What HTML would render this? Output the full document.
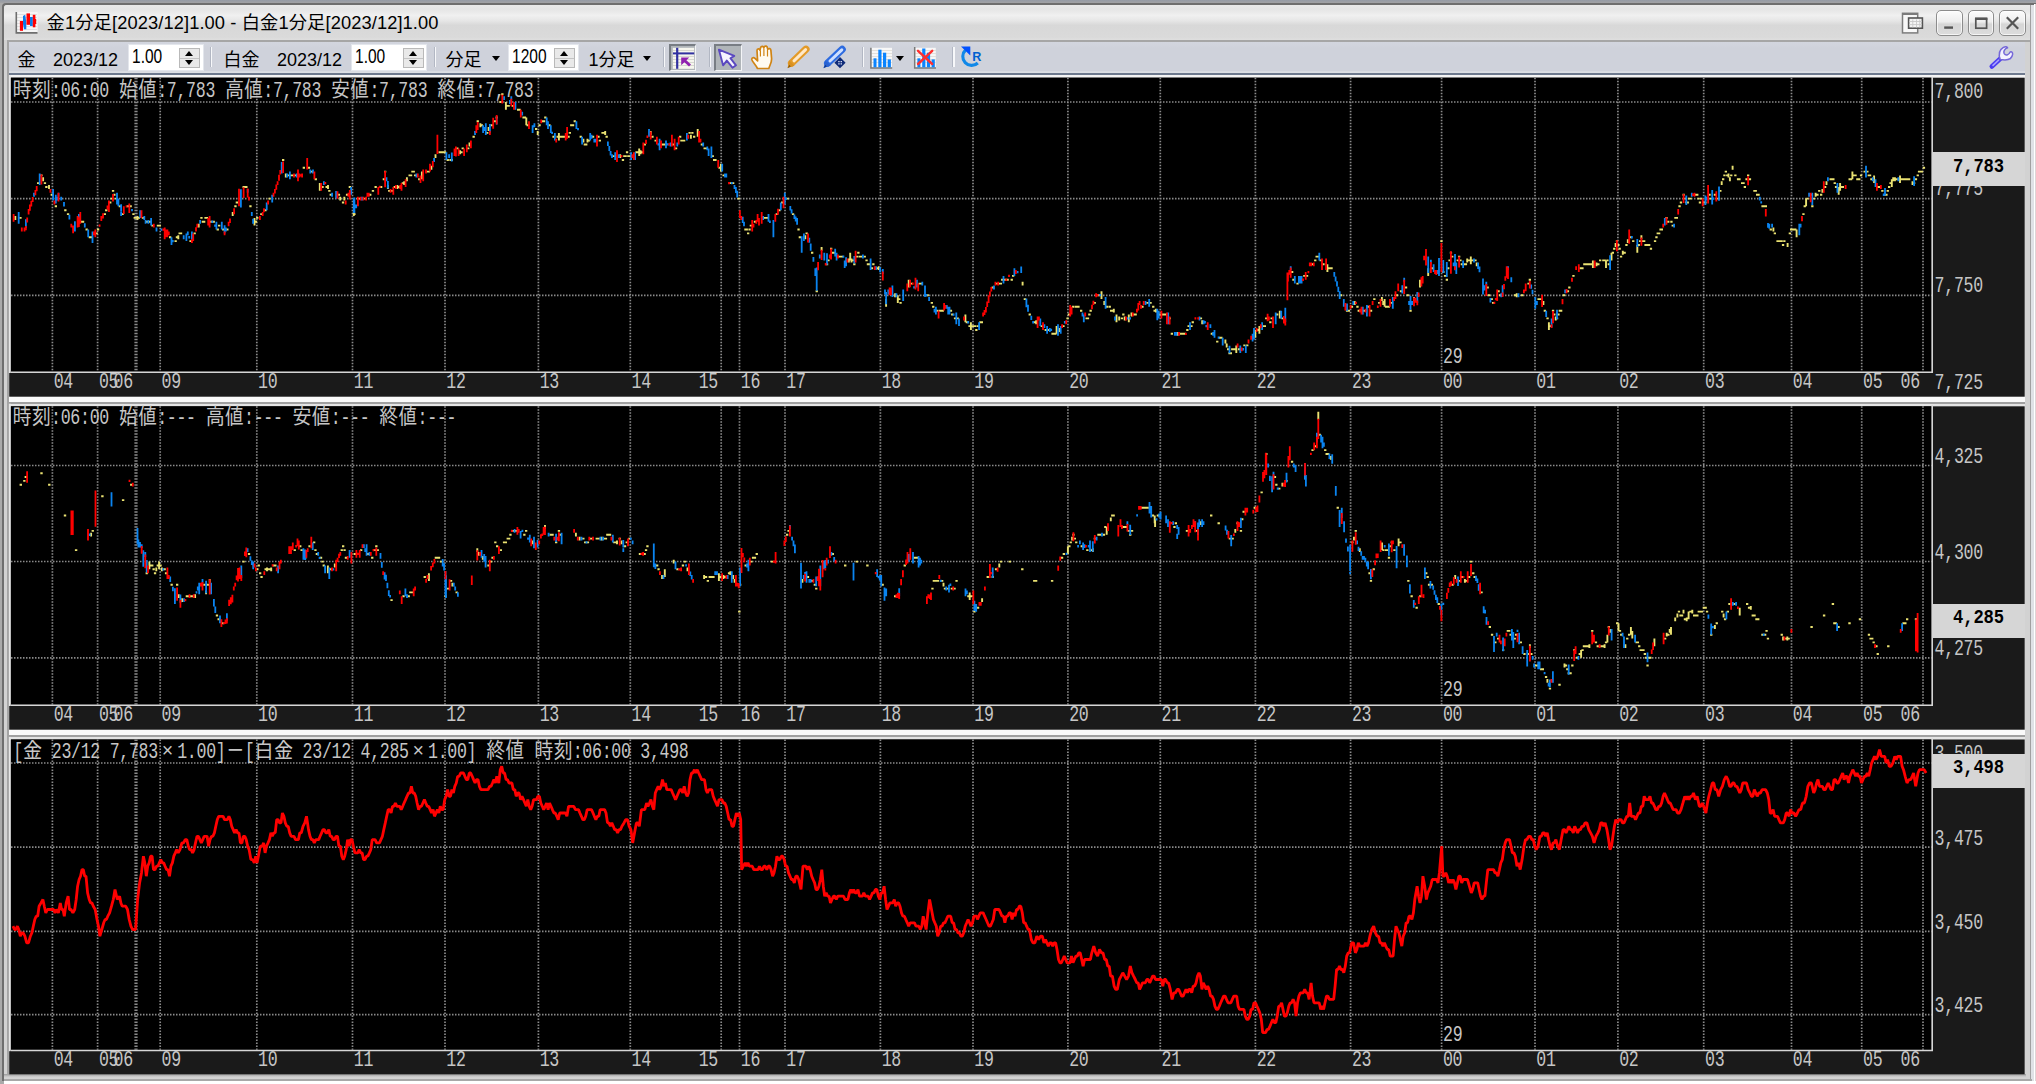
<!DOCTYPE html>
<html lang="ja"><head><meta charset="utf-8"><title>金1分足[2023/12]1.00 - 白金1分足[2023/12]1.00</title>
<style>
html,body{margin:0;padding:0}
body{width:2036px;height:1084px;overflow:hidden;background:#fff;position:relative;font-family:"Liberation Sans","Noto Sans CJK JP",sans-serif;color:#000}
.a{position:absolute}
.ttext{position:absolute;left:46.6px;top:11px;font-size:18.3px;line-height:24px;white-space:nowrap;letter-spacing:0.1px}
.lab{position:absolute;font-size:18px;line-height:24px;top:47.5px;white-space:nowrap}
.inp{position:absolute;top:44.3px;height:27px;background:#fff;box-sizing:border-box;border:1px solid #e3e6ec;font-size:18.5px;line-height:22px}
.inp span{position:absolute;left:3px;top:-0.3px;transform:scale(.84,1.1);transform-origin:0 50%}
.spin{position:absolute;right:2.5px;top:2.5px;width:21px;height:20.5px;background:#e9e9e9;border:1px solid #b9b9b9;box-sizing:border-box}
.spin:before{content:"";position:absolute;left:0;top:9px;width:19px;height:1.5px;background:#c4c4c4}
.spin i{position:absolute;left:5px;width:0;height:0;border-left:4.5px solid transparent;border-right:4.5px solid transparent}
.spin i.u{top:2.5px;border-bottom:5px solid #000}
.spin i.d{bottom:2.5px;border-top:5px solid #000}
.dd{position:absolute;top:56px;width:0;height:0;border-left:4.6px solid transparent;border-right:4.6px solid transparent;border-top:5px solid #000}
.vs{position:absolute;top:47px;width:1.5px;height:20px;background:#f7f8fa;border-left:1.5px solid #b2b7c3}
.btn{position:absolute;top:43.5px;height:27.2px;box-sizing:border-box}
.btn.on{background:#b0b5b9;border:2px solid #787d84;border-right:1.6px solid #f4f5f7;border-bottom:1.6px solid #f4f5f7}
.cv{position:absolute;left:0;top:0}
.m{position:absolute;white-space:pre;color:#c6c6c6;line-height:24px;height:24px;font-family:"Liberation Mono","IPAGothic",monospace}
.m .j{font-size:19.3px;font-family:"Liberation Mono","IPAGothic",monospace;display:inline-block;transform:scaleY(1.15);transform-origin:50% 55%}
.m .l{font-size:16.6px;letter-spacing:-0.31px;font-family:"Liberation Mono","IPAGothic",monospace;display:inline-block;transform:scaleY(1.3);transform-origin:50% 50%}
.m .x{display:inline-block;width:19.3px;text-align:center;font-size:19.3px;font-family:"Liberation Mono","IPAGothic",monospace}
.m.pb{color:#000;font-weight:bold;text-align:center;font-size:17.2px;letter-spacing:-0.1px;transform:scaleY(1.15)}
.wb{position:absolute;top:9.6px;width:26.6px;height:26.6px;box-sizing:border-box;border:1.8px solid #8c8c8c;border-radius:5px;background:linear-gradient(#fcfcfc,#ededed 45%,#d6d6d6 55%,#dcdcdc);box-shadow:inset 0 0 0 1px rgba(255,255,255,.7)}
</style></head><body>
<!-- frame -->
<div class="a" style="left:0;top:0;width:2036px;height:1084px;background:#aaa"></div>
<div class="a" style="left:0;top:0;width:2036px;height:3px;background:linear-gradient(#949aa5,#a2a2a4)"></div>
<div class="a" style="left:1.6px;top:2.9px;width:2034.4px;height:1078.1px;background:#6e6e6e;border-radius:4px 0 0 0"></div>
<div class="a" style="left:3.6px;top:4.8px;width:2032.4px;height:1079.2px;background:#d2d2d2;border-radius:3px 0 0 0"></div>
<!-- title gradient -->
<div class="a" style="left:3.6px;top:4.8px;width:2027.4px;height:35.4px;border-radius:3px 0 0 0;background:linear-gradient(#e9e9e9 0%,#e5e5e5 12%,#f0f0f0 30%,#e6e6e6 45%,#d8d8d8 58%,#dadada 92%,#dfdfdf 100%)"></div>
<!-- right edge stripes -->
<div class="a" style="left:2029.8px;top:4.8px;width:1.5px;height:1076px;background:#a0a0a0"></div>
<div class="a" style="left:2031.3px;top:4.8px;width:2.5px;height:1077px;background:#e0e2e6"></div>
<div class="a" style="left:2033.7px;top:3.5px;width:1.4px;height:1081px;background:#fff"></div>
<div class="a" style="left:2035.1px;top:3.5px;width:1px;height:1081px;background:#dcd6d6"></div>
<!-- bottom stripes -->
<div class="a" style="left:3.6px;top:1079.3px;width:2028px;height:1.8px;background:#a8a8a8"></div>
<div class="a" style="left:3.6px;top:1081.4px;width:2032.4px;height:2.6px;background:#fff"></div>
<!-- left mid-gray + inner white border -->
<div class="a" style="left:7.2px;top:40px;width:1.7px;height:1036px;background:#a4a4a4"></div>
<!-- line between title and toolbar -->
<div class="a" style="left:7px;top:40.1px;width:2022.8px;height:2px;background:#a6a6a6"></div>
<!-- toolbar -->
<div class="a" style="left:8.9px;top:42.2px;width:2016.4px;height:30.4px;background:linear-gradient(#d3d6df,#cfd2db 20%,#cfd2db 92%,#dcdfe4 96%)"></div>
<div class="a" style="left:8.9px;top:72.6px;width:2016.4px;height:2.2px;background:#6e7a8e"></div>
<div class="a" style="left:8.9px;top:74.9px;width:2016.4px;height:1001px;background:#f4f4f4"></div>
<div class="a" style="left:1990px;top:1074.3px;width:36px;height:5px;background:linear-gradient(#9a9a9a,#d2d2d2 60%,#d4d4d4)"></div>
<div class="a" style="left:3.6px;top:1074.3px;width:2022px;height:5px;background:linear-gradient(#9a9a9a,#d2d2d2 60%,#d4d4d4)"></div>
<!-- panel separators -->
<div class="a" style="left:8.9px;top:396.7px;width:2016.4px;height:5.6px;background:#fafafa"></div>
<div class="a" style="left:8.9px;top:402.3px;width:2016.4px;height:1.8px;background:#a0a0a0"></div>
<div class="a" style="left:8.9px;top:404.1px;width:2016.4px;height:2.2px;background:#e4e4e4"></div>
<div class="a" style="left:8.9px;top:729.7px;width:2016.4px;height:5.6px;background:#fafafa"></div>
<div class="a" style="left:8.9px;top:735.3px;width:2016.4px;height:1.7px;background:#a0a0a0"></div>
<div class="a" style="left:8.9px;top:737px;width:2016.4px;height:2.5px;background:#e4e4e4"></div>
<!--TITLEICON-->
<div class="ttext">金1分足[2023/12]1.00 - 白金1分足[2023/12]1.00</div>
<div class="wb" style="left:1936.4px"></div><div class="wb" style="left:1967.8px"></div><div class="wb" style="left:1999.2px"></div>
<div class="lab" style="left:17.5px">金</div>
<div class="lab" style="left:53px">2023/12</div>
<div class="inp" style="left:127.5px;width:76px"><span>1.00</span><div class="spin"><i class="u"></i><i class="d"></i></div></div>
<div class="vs" style="left:209.5px"></div>
<div class="lab" style="left:223.5px">白金</div>
<div class="lab" style="left:277px">2023/12</div>
<div class="inp" style="left:351px;width:76px"><span>1.00</span><div class="spin"><i class="u"></i><i class="d"></i></div></div>
<div class="vs" style="left:433.5px"></div>
<div class="lab" style="left:445.5px">分足</div>
<div class="dd" style="left:491.5px"></div>
<div class="inp" style="left:507.5px;width:71px"><span>1200</span><div class="spin"><i class="u"></i><i class="d"></i></div></div>
<div class="lab" style="left:588.5px">1分足</div>
<div class="dd" style="left:643px"></div>
<div class="vs" style="left:662.5px"></div>
<div class="btn on" style="left:668.8px;width:26.8px"></div>
<div class="vs" style="left:708.5px"></div>
<div class="btn on" style="left:713.9px;width:28px"></div>
<div class="vs" style="left:861.5px"></div>
<div class="dd" style="left:896.3px"></div>
<div class="vs" style="left:952px"></div>
<svg class="cv" width="2036" height="84" viewBox="0 0 2036 84">

<!-- title icon -->
<g>
<rect x="16.8" y="12" width="20.8" height="20.5" fill="#f6f6f6"/>
<path d="M17 14.5H37M17 17.5H37M17 20.5H37M17 23.5H37M17 26.5H37M17 29.5H37" stroke="#dcdcdc" stroke-width="0.9"/>
<path d="M16.3 12V32.9H37.5" stroke="#6e6e6e" stroke-width="1.6" fill="none"/>
<rect x="19.9" y="21" width="3.1" height="9.8" fill="#ff0000"/>
<path d="M23 16 L25.2 14.8 L26.3 22 L26.3 29.2 L24 29.2 L23 24Z" fill="#0a7be8"/>
<rect x="26.5" y="13.4" width="3.5" height="11.4" fill="#ff0000"/>
<rect x="30" y="17" width="2.8" height="9" fill="#0a7be8"/>
<rect x="32.8" y="14.8" width="2.6" height="12.5" fill="#ff0000"/>
<rect x="34.8" y="19" width="1.4" height="5" fill="#ff0000"/>
</g>
<!-- window buttons -->
<g fill="none">
<rect x="1902.5" y="13.3" width="15.2" height="19.6" fill="#f8f8f8" stroke="#7c7c7c" stroke-width="1.5"/>
<rect x="1902.5" y="13" width="15.2" height="2" fill="#7c7c7c"/>
<rect x="1908.6" y="18" width="13.8" height="10.2" fill="#f4f4f4" stroke="#555" stroke-width="1.6"/>
<path d="M1909 21.5H1922M1909 24.6H1922M1912.8 19.5V27.5M1916.5 19.5V27.5M1919.8 19.5V27.5" stroke="#c8c8c8" stroke-width="0.9"/>
<path d="M1944.2 27.6H1953" stroke="#555" stroke-width="2.4"/>
<rect x="1975.8" y="19" width="10.8" height="9.2" stroke="#555" stroke-width="1.7"/>
<rect x="1975" y="17.4" width="12.4" height="2.6" fill="#555"/>
<path d="M2006.8 17.2L2018.2 28.8M2018.2 17.2L2006.8 28.8" stroke="#555" stroke-width="2.2"/>
</g>
<!-- crosshair icon -->
<g>
<rect x="672.8" y="47.8" width="21.4" height="21" fill="#f6f6ee"/>
<path d="M673 50.5H694M673 56.5H694M673 59.5H694M673 62.5H694M673 65.5H694" stroke="#d4d4cc" stroke-width="0.9"/>
<path d="M677.2 47.8V68.8" stroke="#3030a0" stroke-width="2.2"/>
<path d="M673 53.4H694.2" stroke="#3030a0" stroke-width="2"/>
<path d="M681.2 57.6H689.2L686.4 60.2L691 64.4L689 66.4L684.4 62.2L681.2 65.2Z" fill="#9020b0"/>
</g>
<!-- pointer -->
<path d="M718.9 49.7L734.3 55.9L730.4 58.2L736 65.3L732.5 67.7L726.8 60.6L723.1 65.3Z" fill="#f6f3ff" stroke="#5a48c0" stroke-width="1.9" stroke-linejoin="round"/>
<!-- hand -->
<path d="M757.5 68.5 C755.5 64.5 752 61.5 751.8 59.4 C751.7 57.6 753.6 57.2 755 58.4 L757.6 60.8 L757 50.5 C757 48.6 759.6 48.4 760 50.2 L760.6 47.6 C761.2 45.8 763.6 46 763.8 47.8 L764.2 46.9 C765.2 45.4 767.4 46 767.4 48 L767.8 49.2 C769 47.9 770.8 48.6 770.9 50.4 L771.6 58.5 C771.8 62.5 769.8 65 768.8 68.5Z" fill="#fffaf0" stroke="#d08414" stroke-width="1.7" stroke-linejoin="round"/>
<path d="M760.4 50.5V56.5M763.9 48.5V56M767.5 49.5V56.5" stroke="#d08414" stroke-width="1.2" fill="none"/>
<!-- pencil orange -->
<g>
<path d="M806 49.2L791.5 63.2" stroke="#e39a28" stroke-width="7.2" stroke-linecap="round"/>
<path d="M805.6 49.6L794 60.8" stroke="#ffe9c8" stroke-width="3" stroke-linecap="round"/>
<path d="M789.2 60.6L794.4 65.6L787.6 68Z" fill="#d89020"/>
<path d="M787.4 68.2L789.4 64.8L790.8 66.6Z" fill="#8a5a10"/>
</g>
<!-- blue pen -->
<g>
<path d="M842.2 49.4L827.6 63.2" stroke="#2e6ce0" stroke-width="7.2" stroke-linecap="round"/>
<path d="M841.8 49.8L830 61" stroke="#cfe0ff" stroke-width="3" stroke-linecap="round"/>
<path d="M825.4 60.6L830.6 65.6L823.6 68Z" fill="#2a62d0"/>
<path d="M823.4 68.2L825.4 64.8L826.8 66.6Z" fill="#123c90"/>
<path d="M840 57.1L845.6 62.7L840 68.3L834.4 62.7Z" fill="#0e2a78"/>
<path d="M838.3 61h1.3v1.3h-1.3zM840.6 61h1.3v1.3h-1.3zM838.3 63.3h1.3v1.3h-1.3zM840.6 63.3h1.3v1.3h-1.3z" fill="#e8eeff"/>
</g>
<!-- bar chart -->
<g>
<rect x="871.2" y="47.8" width="20.8" height="19.6" fill="#f7f7f7"/>
<path d="M871.5 50.5H892M871.5 53.5H892M871.5 56.5H892M871.5 59.5H892M871.5 62.5H892" stroke="#e0dcd6" stroke-width="0.9"/>
<path d="M870.9 47.8V68H892.2" stroke="#7a7a7a" stroke-width="1.5" fill="none"/>
<rect x="873.5" y="58.3" width="3" height="9" fill="#0a84ff"/><rect x="878.3" y="49.7" width="3.2" height="17.6" fill="#0a84ff"/><rect x="883" y="52.7" width="3.2" height="14.6" fill="#0a84ff"/><rect x="887.7" y="59.4" width="3.2" height="7.9" fill="#0a84ff"/>
</g>
<!-- x chart -->
<g>
<rect x="915" y="47.8" width="20.8" height="19.6" fill="#f7f7f7"/>
<path d="M915.5 50.5H936M915.5 53.5H936M915.5 56.5H936M915.5 59.5H936M915.5 62.5H936" stroke="#e0dcd6" stroke-width="0.9"/>
<path d="M914.7 47V68H936" stroke="#7a7a7a" stroke-width="1.5" fill="none"/>
<rect x="917.4" y="58.3" width="3" height="9" fill="#0a84ff"/><rect x="922.2" y="48.5" width="3.2" height="18.8" fill="#0a84ff"/><rect x="926.9" y="52.7" width="3.2" height="14.6" fill="#0a84ff"/><rect x="931.6" y="59.4" width="3.2" height="7.9" fill="#0a84ff"/>
<path d="M918 50.8L932.2 64M932.2 50.8L918 64" stroke="#ff3030" stroke-width="2.4" stroke-linecap="round"/>
</g>
<!-- refresh -->
<g>
<path d="M965.6 50A8.6 8.6 0 1 0 977.8 63" stroke="#1088e8" stroke-width="3.1" fill="none"/>
<path d="M961 46.6H970.3V55.4Z" fill="#0050ff"/>
<text x="972.3" y="61.2" font-family="'Liberation Sans',sans-serif" font-weight="bold" font-size="12.6" fill="#0060d0">R</text>
</g>
<!-- wrench -->
<g>
<path d="M1991.8 66.5L2001 58" stroke="#4a3cf0" stroke-width="4.6" stroke-linecap="round"/>
<path d="M1993 65.4L1998.6 60.2" stroke="#a8a0ff" stroke-width="1.6" stroke-linecap="round"/>
<path d="M2000.2 59.6 C1998.6 55 1999 50 2003.4 47.4 C2005 46.6 2007 46.8 2007.6 47.8 C2004.4 48.8 2003.2 51.6 2004.2 53.6 C2005.6 55.8 2008.6 55.4 2010.2 52 C2011.8 51.4 2012.8 52.6 2012.6 54.4 C2012 58.6 2008 60.4 2002.6 59.8Z" fill="#f4f2ff" stroke="#7466d8" stroke-width="1.5" stroke-linejoin="round"/>
</g>
</svg>

<svg class="cv" width="2036" height="1084" viewBox="0 0 2036 1084">
<rect x="9.2" y="77.7" width="2015.5" height="319.0" fill="#1a1a1a"/>
<rect x="8.9" y="75.10000000000001" width="1.9" height="297.90000000000003" fill="#e6e6e6"/>
<rect x="11" y="77.7" width="1920.5" height="293.90000000000003" fill="#000"/>
<path d="M52.4 77.7V371.6M97.6 77.7V371.6M160.2 77.7V371.6M256.8 77.7V371.6M352.5 77.7V371.6M445 77.7V371.6M538.4 77.7V371.6M630.3 77.7V371.6M721.2 77.7V371.6M739.5 77.7V371.6M785 77.7V371.6M880.4 77.7V371.6M973 77.7V371.6M1067.9 77.7V371.6M1160.3 77.7V371.6M1255.4 77.7V371.6M1350.6 77.7V371.6M1441.6 77.7V371.6M1535 77.7V371.6M1617.9 77.7V371.6M1703.7 77.7V371.6M1791.5 77.7V371.6M1861.7 77.7V371.6M1923 77.7V371.6M11 102H1931.5M11 198.7H1931.5M11 295.3H1931.5" stroke="#8a8a8a" stroke-width="1.7" stroke-dasharray="1.5 1.5" fill="none"/>
<path d="M136 77.7V371.6" stroke="#8a8a8a" stroke-width="3.2" stroke-dasharray="1.5 1.5" fill="none"/>
<path d="M11 372.3H1932.9M1932.2 76.7V373.0" stroke="#d6d6d6" stroke-width="1.6" fill="none"/>
<rect x="9.2" y="406.3" width="2015.5" height="323.40000000000003" fill="#1a1a1a"/>
<rect x="8.9" y="403.7" width="1.9" height="302.3" fill="#e6e6e6"/>
<rect x="11" y="406.3" width="1920.5" height="298.3" fill="#000"/>
<path d="M52.4 406.3V704.6M97.6 406.3V704.6M160.2 406.3V704.6M256.8 406.3V704.6M352.5 406.3V704.6M445 406.3V704.6M538.4 406.3V704.6M630.3 406.3V704.6M721.2 406.3V704.6M739.5 406.3V704.6M785 406.3V704.6M880.4 406.3V704.6M973 406.3V704.6M1067.9 406.3V704.6M1160.3 406.3V704.6M1255.4 406.3V704.6M1350.6 406.3V704.6M1441.6 406.3V704.6M1535 406.3V704.6M1617.9 406.3V704.6M1703.7 406.3V704.6M1791.5 406.3V704.6M1861.7 406.3V704.6M1923 406.3V704.6M11 465.5H1931.5M11 561.5H1931.5M11 657.8H1931.5" stroke="#8a8a8a" stroke-width="1.7" stroke-dasharray="1.5 1.5" fill="none"/>
<path d="M136 406.3V704.6" stroke="#8a8a8a" stroke-width="3.2" stroke-dasharray="1.5 1.5" fill="none"/>
<path d="M11 705.3000000000001H1932.9M1932.2 405.3V706.0" stroke="#d6d6d6" stroke-width="1.6" fill="none"/>
<rect x="9.2" y="739.5" width="2015.5" height="334.79999999999995" fill="#1a1a1a"/>
<rect x="8.9" y="736.9" width="1.9" height="314.30000000000007" fill="#e6e6e6"/>
<rect x="11" y="739.5" width="1920.5" height="310.29999999999995" fill="#000"/>
<path d="M52.4 739.5V1049.8M97.6 739.5V1049.8M160.2 739.5V1049.8M256.8 739.5V1049.8M352.5 739.5V1049.8M445 739.5V1049.8M538.4 739.5V1049.8M630.3 739.5V1049.8M721.2 739.5V1049.8M739.5 739.5V1049.8M785 739.5V1049.8M880.4 739.5V1049.8M973 739.5V1049.8M1067.9 739.5V1049.8M1160.3 739.5V1049.8M1255.4 739.5V1049.8M1350.6 739.5V1049.8M1441.6 739.5V1049.8M1535 739.5V1049.8M1617.9 739.5V1049.8M1703.7 739.5V1049.8M1791.5 739.5V1049.8M1861.7 739.5V1049.8M1923 739.5V1049.8M11 763H1931.5M11 847.2H1931.5M11 931.3H1931.5M11 1014.6H1931.5" stroke="#8a8a8a" stroke-width="1.7" stroke-dasharray="1.5 1.5" fill="none"/>
<path d="M136 739.5V1049.8" stroke="#8a8a8a" stroke-width="3.2" stroke-dasharray="1.5 1.5" fill="none"/>
<path d="M11 1050.5H1932.9M1932.2 738.5V1051.2" stroke="#d6d6d6" stroke-width="1.6" fill="none"/>
<path d="M15.3 216.0v3.9M19.3 217.9h2.3M37.0 183.1h2.3M40.3 175.4h2.3M43.1 177.3v3.9M43.8 183.1h2.3M45.2 187.0h2.3M49.0 185.1v3.9M50.6 194.7h2.3M54.7 206.3h2.3M64.2 210.2h2.3M66.9 214.1h2.3M80.6 221.8h2.3M81.9 221.8h2.3M85.5 229.5h2.3M88.7 237.2h2.3M90.1 237.2h2.3M95.5 233.4h2.3M96.9 229.5h2.3M103.7 214.1h2.3M105.1 210.2h2.3M109.1 202.5h2.3M110.5 198.6h2.3M111.9 190.9h2.3M113.2 194.7h2.3M114.6 198.6h2.3M118.7 206.3h2.3M121.4 214.1h2.3M126.8 206.3h2.3M129.5 206.3h2.3M132.3 214.1h2.3M133.6 217.9h2.3M135.0 217.9h2.3M137.5 216.0v3.9M137.7 217.9h2.3M141.8 217.9h2.3M145.9 221.8h2.3M148.6 221.8h2.3M151.3 225.6h2.3M156.8 225.6h2.3M158.6 225.6h2.3M169.0 237.2h2.3M174.5 241.1h2.3M175.8 237.2h2.3M178.3 235.3v3.9M178.5 233.4h2.3M179.9 233.4h2.3M189.4 241.1h2.3M193.5 233.4h2.3M198.7 223.7v3.9M200.3 217.9h2.3M201.7 221.8h2.3M203.0 221.8h2.3M204.4 217.9h2.3M205.8 217.9h2.3M209.8 221.8h2.3M212.6 221.8h2.3M216.6 229.5h2.3M218.0 225.6h2.3M222.1 229.5h2.3M226.2 229.5h2.3M232.7 212.1v3.9M234.3 206.3h2.3M235.7 202.5h2.3M242.5 187.0h2.3M243.9 187.0h2.3M245.2 187.0h2.3M249.3 206.3h2.3M254.5 217.9v7.7M254.8 221.8h2.3M256.1 217.9h2.3M260.2 214.1h2.3M264.3 210.2h2.3M268.4 198.6h2.3M282.0 160.0h2.3M285.8 173.5v3.9M287.4 175.4h2.3M290.1 175.4h2.3M291.5 175.4h2.3M294.2 175.4h2.3M302.7 167.7h2.3M307.8 167.7h2.3M310.5 171.6h2.3M314.6 179.3h2.3M319.8 183.1v7.7M321.4 187.0h2.3M325.5 187.0h2.3M328.0 185.1v3.9M328.2 190.9h2.3M329.6 194.7h2.3M337.8 194.7h2.3M340.2 196.7v3.9M341.9 202.5h2.3M344.3 196.7v3.9M345.9 194.7h2.3M348.7 187.0h2.3M353.8 212.1v3.9M353.3 214.1h2.3M356.8 198.6h2.3M358.2 198.6h2.3M363.6 198.6h2.3M369.1 194.7h2.3M371.8 190.9h2.3M374.5 187.0h2.3M380.0 187.0h2.3M382.7 179.3h2.3M384.0 171.6h2.3M387.9 185.1v3.9M388.1 190.9h2.3M390.8 190.9h2.3M393.6 187.0h2.3M397.4 185.1v3.9M397.6 187.0h2.3M401.7 183.1h2.3M404.2 181.2v3.9M406.9 177.3v3.9M408.5 175.4h2.3M409.9 175.4h2.3M411.3 171.6h2.3M412.6 171.6h2.3M414.0 175.4h2.3M418.1 179.3h2.3M421.9 171.6v7.7M426.2 171.6h2.3M427.6 171.6h2.3M431.4 165.8v3.9M435.5 154.2v3.9M438.5 152.2h2.3M439.8 152.2h2.3M441.2 152.2h2.3M442.6 152.2h2.3M443.9 152.2h2.3M446.6 160.0h2.3M449.4 160.0h2.3M450.7 160.0h2.3M456.2 148.4h2.3M460.0 150.3v3.9M460.3 152.2h2.3M461.6 148.4h2.3M467.1 148.4h2.3M469.5 142.6v3.9M472.5 136.8h2.3M476.6 121.3h2.3M480.4 123.3v3.9M480.7 125.2h2.3M486.1 132.9h2.3M488.6 127.1v3.9M490.5 125.2h2.3M493.9 121.3h2.3M495.6 117.5h2.3M499.3 102.0h2.3M501.2 94.3h2.3M505.9 102.0v7.7M506.1 105.9h2.3M507.5 105.9h2.3M511.6 105.9h2.3M517.0 109.7h2.3M518.4 109.7h2.3M522.4 117.5h2.3M523.8 117.5h2.3M526.3 117.5v7.7M526.5 125.2h2.3M535.0 129.0h2.3M537.7 131.0v3.9M538.4 125.2h2.3M541.5 121.3h2.3M542.9 121.3h2.3M544.2 117.5h2.3M548.3 125.2h2.3M552.4 136.8h2.3M556.5 136.8h2.3M558.9 132.9v7.7M559.2 136.8h2.3M560.6 136.8h2.3M561.9 136.8h2.3M563.3 136.8h2.3M567.4 136.8h2.3M568.7 132.9h2.3M570.1 125.2h2.3M571.9 125.2h2.3M573.6 121.3h2.3M579.6 136.8h2.3M583.4 138.7v3.9M583.7 144.5h2.3M585.1 144.5h2.3M587.5 138.7v3.9M587.8 140.6h2.3M591.9 136.8h2.3M597.3 136.8h2.3M598.7 140.6h2.3M601.4 132.9h2.3M602.7 132.9h2.3M605.2 131.0v3.9M605.5 136.8h2.3M612.3 156.1h2.3M620.2 154.2v3.9M621.8 160.0h2.3M623.2 156.1h2.3M624.5 156.1h2.3M625.9 152.2h2.3M627.2 156.1h2.3M628.6 156.1h2.3M635.4 152.2h2.3M636.8 152.2h2.3M639.2 148.4v7.7M640.6 150.3v3.9M640.8 152.2h2.3M643.6 144.5h2.3M650.7 131.0v3.9M651.3 136.8h2.3M654.5 140.6h2.3M661.3 144.5h2.3M663.1 144.5h2.3M672.1 144.5h2.3M674.9 148.4h2.3M679.0 136.8h2.3M680.3 140.6h2.3M681.7 140.6h2.3M683.0 140.6h2.3M688.5 132.9h2.3M690.9 134.8v3.9M691.2 132.9h2.3M693.0 136.8h2.3M697.7 129.0v7.7M700.7 144.5h2.3M703.5 148.4h2.3M704.8 148.4h2.3M711.6 156.1h2.3M713.0 160.0h2.3M714.3 160.0h2.3M718.4 167.7h2.3M720.9 163.8v7.7M722.5 175.4h2.3M729.3 183.1h2.3M732.0 183.1h2.3M737.5 198.6h2.3M744.3 229.5h2.3M745.6 229.5h2.3M747.0 233.4h2.3M748.4 229.5h2.3M749.7 225.6h2.3M753.8 221.8h2.3M763.3 217.9h2.3M764.7 217.9h2.3M766.1 217.9h2.3M775.6 214.1h2.3M778.3 210.2h2.3M781.0 202.5h2.3M786.5 198.6h2.3M791.9 214.1h2.3M797.4 229.5h2.3M798.7 237.2h2.3M805.3 235.3v3.9M805.5 233.4h2.3M811.0 252.7h2.3M815.6 291.3h2.3M821.6 246.9v3.9M825.9 264.3h2.3M827.3 260.4h2.3M830.0 248.8h2.3M831.4 252.7h2.3M832.7 252.7h2.3M838.2 256.6h2.3M839.5 256.6h2.3M840.9 256.6h2.3M848.8 258.5v3.9M850.2 252.7v7.7M851.5 258.5v3.9M851.8 260.4h2.3M853.2 264.3h2.3M855.9 256.6h2.3M857.2 252.7h2.3M858.6 256.6h2.3M860.0 256.6h2.3M863.6 256.6h2.3M865.4 260.4h2.3M866.8 264.3h2.3M868.1 264.3h2.3M870.8 268.2h2.3M872.2 264.3h2.3M876.3 268.2h2.3M878.7 266.2v3.9M886.1 299.1v7.7M895.1 293.3v3.9M897.8 295.2v7.7M898.1 299.1h2.3M899.4 302.9h2.3M908.7 279.7v7.7M910.3 283.6h2.3M918.5 283.6h2.3M919.8 283.6h2.3M926.6 295.2h2.3M930.7 302.9h2.3M932.1 306.8h2.3M936.2 310.7h2.3M938.9 310.7h2.3M940.3 310.7h2.3M941.6 310.7h2.3M949.8 310.7h2.3M951.1 314.5h2.3M953.9 318.4h2.3M956.6 318.4h2.3M965.4 314.5v7.7M965.7 322.2h2.3M968.4 326.1h2.3M970.9 322.2v7.7M971.1 326.1h2.3M972.5 326.1h2.3M973.9 326.1h2.3M975.2 330.0h2.3M976.6 326.1h2.3M979.3 322.2h2.3M980.7 322.2h2.3M991.6 287.5h2.3M995.6 283.6h2.3M998.4 283.6h2.3M999.7 283.6h2.3M1001.1 279.7h2.3M1003.8 279.7h2.3M1006.5 279.7h2.3M1010.6 279.7h2.3M1012.0 275.9h2.3M1022.6 281.7v3.9M1023.7 299.1h2.3M1028.6 314.5h2.3M1033.8 322.2h2.3M1036.2 320.3v3.9M1040.6 326.1h2.3M1044.6 330.0h2.3M1047.4 330.0h2.3M1051.4 333.8h2.3M1052.8 333.8h2.3M1054.2 333.8h2.3M1056.6 326.1v7.7M1059.3 328.0v3.9M1062.3 326.1h2.3M1066.4 318.4h2.3M1067.8 314.5h2.3M1071.9 306.8h2.3M1074.6 306.8h2.3M1075.9 306.8h2.3M1077.3 306.8h2.3M1080.0 310.7h2.3M1085.5 318.4h2.3M1086.8 318.4h2.3M1088.2 314.5h2.3M1089.5 310.7h2.3M1093.6 302.9h2.3M1097.7 295.2h2.3M1101.5 291.3v7.7M1104.3 301.0v3.9M1105.9 306.8h2.3M1108.6 306.8h2.3M1110.0 310.7h2.3M1111.3 310.7h2.3M1113.8 308.7v3.9M1116.5 314.5v7.7M1119.2 316.5v3.9M1120.8 318.4h2.3M1122.2 314.5h2.3M1124.7 316.5v3.9M1128.8 314.5v7.7M1131.5 312.6v3.9M1133.1 314.5h2.3M1134.5 314.5h2.3M1141.3 306.8h2.3M1146.3 302.9h2.3M1149.4 302.9h2.3M1152.1 306.8h2.3M1153.5 310.7h2.3M1156.0 308.7v3.9M1159.0 314.5h2.3M1161.7 314.5h2.3M1163.0 314.5h2.3M1164.4 314.5h2.3M1168.5 318.4h2.3M1170.7 333.8h2.3M1177.7 331.9v3.9M1179.4 333.8h2.3M1180.7 333.8h2.3M1182.1 333.8h2.3M1183.5 333.8h2.3M1186.2 330.0h2.3M1187.5 326.1h2.3M1190.3 326.1h2.3M1191.6 322.2h2.3M1199.8 318.4h2.3M1202.2 320.3v3.9M1210.7 333.8h2.3M1216.1 341.6h2.3M1218.8 337.7h2.3M1220.2 337.7h2.3M1225.4 339.6v3.9M1226.7 343.5v3.9M1227.0 349.3h2.3M1228.4 353.2h2.3M1229.7 353.2h2.3M1231.1 349.3h2.3M1232.4 349.3h2.3M1233.8 349.3h2.3M1236.3 345.4v7.7M1237.9 349.3h2.3M1243.3 345.4h2.3M1246.1 345.4h2.3M1255.3 330.0v7.7M1256.9 330.0h2.3M1259.4 326.1v7.7M1262.4 326.1h2.3M1263.7 326.1h2.3M1265.1 318.4h2.3M1269.2 322.2h2.3M1270.5 318.4h2.3M1276.0 314.5h2.3M1279.8 310.7v7.7M1281.4 318.4h2.3M1291.0 272.0h2.3M1292.3 279.7h2.3M1296.4 283.6h2.3M1303.2 275.9h2.3M1305.9 275.9h2.3M1311.4 264.3h2.3M1314.1 260.4h2.3M1315.5 256.6h2.3M1316.8 256.6h2.3M1319.5 260.4h2.3M1322.3 264.3h2.3M1327.4 264.3v7.7M1327.7 268.2h2.3M1329.1 268.2h2.3M1330.4 268.2h2.3M1340.0 295.2h2.3M1345.9 310.7h2.3M1347.7 310.7h2.3M1350.8 306.8h2.3M1354.7 301.0v3.9M1356.3 306.8h2.3M1357.6 310.7h2.3M1363.1 310.7h2.3M1367.2 306.8h2.3M1369.9 310.7h2.3M1373.2 299.1h2.3M1378.1 302.9h2.3M1381.9 297.1v3.9M1383.2 301.0v3.9M1384.6 299.1v7.7M1384.9 306.8h2.3M1386.2 306.8h2.3M1387.6 306.8h2.3M1390.3 302.9h2.3M1395.8 295.2h2.3M1399.8 291.3h2.3M1404.9 287.5h2.3M1406.6 295.2h2.3M1409.4 310.7h2.3M1414.0 297.1v3.9M1420.0 279.7v7.7M1428.2 268.2v7.7M1431.1 268.2h2.3M1440.3 241.1h2.3M1442.2 272.0h2.3M1443.9 275.9h2.3M1445.7 279.7h2.3M1447.1 268.2h2.3M1448.4 260.4h2.3M1449.8 252.7h2.3M1451.1 256.6h2.3M1456.6 260.4h2.3M1458.0 256.6h2.3M1459.3 260.4h2.3M1460.7 264.3h2.3M1463.4 264.3h2.3M1464.8 264.3h2.3M1467.2 258.5v3.9M1467.9 260.4h2.3M1470.8 256.6v7.7M1471.6 260.4h2.3M1474.3 260.4h2.3M1476.7 262.4v3.9M1486.5 287.5h2.3M1487.9 295.2h2.3M1490.6 299.1h2.3M1492.0 302.9h2.3M1497.4 291.3h2.3M1498.8 295.2h2.3M1513.8 295.2h2.3M1516.7 293.3v3.9M1521.0 295.2h2.3M1527.4 283.6h2.3M1528.7 279.7h2.3M1537.4 299.1h2.3M1539.2 299.1h2.3M1543.4 301.0v3.9M1543.7 310.7h2.3M1546.4 318.4h2.3M1548.9 322.2v7.7M1549.1 326.1h2.3M1551.9 310.7h2.3M1553.2 314.5h2.3M1555.7 316.5v3.9M1555.9 318.4h2.3M1557.3 314.5h2.3M1558.7 310.7h2.3M1560.0 310.7h2.3M1562.7 295.2h2.3M1566.8 291.3h2.3M1568.2 287.5h2.3M1572.3 275.9h2.3M1579.5 268.2h2.3M1581.3 268.2h2.3M1583.2 264.3h2.3M1584.9 264.3h2.3M1586.6 264.3h2.3M1588.3 264.3h2.3M1590.0 264.3h2.3M1592.9 260.4v7.7M1596.5 262.4v3.9M1597.2 264.3h2.3M1599.0 260.4h2.3M1602.2 260.4h2.3M1603.6 260.4h2.3M1606.0 260.4v7.7M1606.3 260.4h2.3M1607.7 264.3h2.3M1611.5 252.7v7.7M1611.7 252.7h2.3M1613.1 248.8h2.3M1615.6 243.0v3.9M1615.8 241.1h2.3M1617.2 245.0h2.3M1618.5 248.8h2.3M1619.9 256.6h2.3M1622.8 250.8v3.9M1623.5 252.7h2.3M1625.3 245.0h2.3M1627.8 239.2v3.9M1629.4 237.2h2.3M1632.1 241.1h2.3M1637.3 245.0v7.7M1637.6 245.0h2.3M1639.0 241.1h2.3M1641.4 235.3v3.9M1641.7 241.1h2.3M1643.0 241.1h2.3M1644.4 245.0h2.3M1646.2 245.0h2.3M1648.0 245.0h2.3M1649.8 248.8h2.3M1653.9 241.1h2.3M1655.3 237.2h2.3M1656.6 233.4h2.3M1658.0 233.4h2.3M1659.4 229.5h2.3M1660.7 229.5h2.3M1665.4 217.9h2.3M1667.1 221.8h2.3M1670.3 221.8h2.3M1671.6 225.6h2.3M1674.3 217.9h2.3M1675.7 217.9h2.3M1678.4 206.3h2.3M1679.8 202.5h2.3M1682.5 194.7h2.3M1683.9 198.6h2.3M1685.2 202.5h2.3M1686.6 202.5h2.3M1687.9 198.6h2.3M1689.3 198.6h2.3M1694.8 194.7h2.3M1696.1 194.7h2.3M1697.5 198.6h2.3M1698.8 202.5h2.3M1700.2 198.6h2.3M1702.9 202.5h2.3M1704.3 202.5h2.3M1708.4 194.7h2.3M1709.7 198.6h2.3M1713.8 194.7h2.3M1716.5 198.6h2.3M1717.9 198.6h2.3M1719.2 190.9h2.3M1721.7 181.2v3.9M1722.0 179.3h2.3M1723.3 175.4h2.3M1724.7 171.6h2.3M1726.1 175.4h2.3M1728.5 173.5v3.9M1729.9 177.3v3.9M1730.1 175.4h2.3M1732.6 165.8v3.9M1734.2 175.4h2.3M1736.9 179.3h2.3M1738.3 179.3h2.3M1741.0 183.1h2.3M1742.4 183.1h2.3M1743.7 187.0h2.3M1745.4 179.3h2.3M1747.0 175.4h2.3M1748.8 179.3h2.3M1753.3 190.9h2.3M1754.6 190.9h2.3M1756.0 194.7h2.3M1757.4 194.7h2.3M1761.4 206.3h2.3M1763.1 206.3h2.3M1764.7 206.3h2.3M1769.6 229.5h2.3M1773.4 227.6v3.9M1773.7 233.4h2.3M1776.4 241.1h2.3M1777.8 241.1h2.3M1779.1 241.1h2.3M1780.5 241.1h2.3M1781.9 245.0h2.3M1783.2 241.1h2.3M1787.6 243.0v3.9M1788.7 233.4h2.3M1790.0 229.5h2.3M1791.4 229.5h2.3M1792.7 229.5h2.3M1794.1 229.5h2.3M1796.6 229.5v7.7M1802.3 214.1h2.3M1803.6 206.3h2.3M1806.1 198.6v7.7M1806.3 198.6h2.3M1809.6 194.7h2.3M1811.2 206.3h2.3M1812.9 198.6h2.3M1815.6 192.8v3.9M1816.3 194.7h2.3M1818.1 190.9h2.3M1820.0 194.7h2.3M1822.4 188.9v3.9M1824.0 187.0h2.3M1826.5 181.2v3.9M1829.5 179.3h2.3M1830.8 179.3h2.3M1832.2 179.3h2.3M1833.6 183.1h2.3M1834.9 187.0h2.3M1838.7 187.0v7.7M1840.1 183.1v7.7M1840.4 187.0h2.3M1841.7 187.0h2.3M1848.5 179.3h2.3M1849.9 179.3h2.3M1852.4 171.6v7.7M1852.6 175.4h2.3M1854.4 175.4h2.3M1856.2 179.3h2.3M1858.1 179.3h2.3M1859.9 175.4h2.3M1863.5 171.6h2.3M1866.2 171.6h2.3M1867.6 175.4h2.3M1868.9 175.4h2.3M1870.3 179.3h2.3M1874.1 175.4v7.7M1877.1 187.0h2.3M1878.5 187.0h2.3M1881.2 190.9h2.3M1883.9 194.7h2.3M1885.3 194.7h2.3M1886.6 190.9h2.3M1888.0 187.0h2.3M1889.4 183.1h2.3M1891.8 179.3v7.7M1893.2 177.3v3.9M1894.9 177.3v3.9M1895.5 179.3h2.3M1900.0 175.4v7.7M1900.7 179.3h2.3M1902.5 179.3h2.3M1904.3 179.3h2.3M1906.1 179.3h2.3M1908.0 179.3h2.3M1912.5 181.2v3.9M1913.0 183.1h2.3M1914.8 179.3h2.3M1916.6 175.4h2.3M1917.9 171.6h2.3M1919.3 171.6h2.3M1920.7 171.6h2.3M1922.8 167.7h2.3" stroke="#eae272" stroke-width="1.9" fill="none"/>
<path d="M25.9 219.2V228.1M55.8 194.7V203.6M74.9 221.3V231.6M121.1 204.2V211.7M191.9 231.5V239.8M224.6 225.3V233.5M240.9 189.3V207.6M354.4 197.4V213.1M387.9 181.1V188.6M451.8 152.5V161.4M489.9 124.0V132.8M496.7 116.5V124.6M773.4 219.9V233.5M801.7 236.2V249.8M816.7 267.5V290.7M827.0 253.2V264.8M846.1 257.3V266.2M854.3 256.0V263.4M886.1 292.0V304.3M1229.5 345.8V353.3M1285.3 307.7V322.0M1347.0 303.6V311.1M1402.3 285.2V293.4M1410.5 296.1V309.7M1417.3 292.0V302.9M1428.2 256.6V273.0M1439.0 258.0V271.6M1443.3 260.0V273.0M1446.8 262.1V277.1M1455.0 253.9V270.2M1483.0 278.4V292.0M1502.6 285.2V294.7M1551.6 318.6V327.4M1557.0 309.7V319.2M1610.1 255.3V263.4M1637.3 238.9V247.1M1686.3 195.4V204.9M1705.4 195.4V204.9M1712.2 190.0V202.2M1719.0 186.6V200.8M1812.3 192.7V204.9M1837.4 182.9V192.7M1885.0 187.9V195.4M1914.1 176.3V185.9M18.7 212.1v11.6M34.0 192.8v3.9M39.7 173.5v11.6M53.1 188.9v11.6M57.2 196.7v3.9M58.5 192.8v3.9M61.2 196.7v3.9M64.0 202.0v4.4M69.4 214.7v4.9M78.9 214.1v7.7M84.8 223.2v4.3M88.2 229.5v7.7M92.5 231.4v11.6M117.0 192.8v11.6M118.4 198.6v7.7M121.1 212.1v3.9M132.0 209.0v2.3M140.2 210.2v7.7M144.3 216.0v3.9M145.6 219.9v3.9M148.3 219.9v3.9M151.1 217.9v7.7M156.5 227.6v3.9M161.5 228.4v2.3M171.5 237.2v7.7M172.8 239.9v2.3M183.7 235.3v3.9M186.4 233.4v7.7M187.8 231.4v3.9M189.2 236.1v2.3M200.1 219.9v3.9M212.3 220.6v2.3M215.0 224.5v2.3M216.4 221.8v7.7M221.8 221.8v7.7M225.9 227.6v3.9M247.7 188.9v3.9M251.8 212.1v3.9M253.1 218.8v5.0M266.7 202.5v7.7M272.2 194.7v7.7M281.7 161.9v11.6M287.2 173.5v3.9M289.9 171.6v7.7M296.7 173.5v3.9M310.3 169.6v3.9M313.0 169.6v3.9M323.9 181.2v3.9M332.1 192.8v3.9M336.1 190.9v7.7M351.1 187.0v7.7M353.8 198.1V213.1M356.2 204.4v3.9M362.0 196.7v3.9M386.5 177.3v3.9M416.4 173.5v3.9M434.1 158.0v3.9M446.4 152.2v7.7M449.1 154.2v3.9M475.0 131.0v3.9M483.1 125.2v7.7M484.5 127.1v3.9M485.8 123.3v11.6M504.1 96.2v3.9M509.9 100.1v3.9M511.3 96.2v3.9M515.4 102.0v7.7M522.2 111.7v3.9M532.6 125.2v7.7M534.4 123.3v3.9M546.7 117.5v7.7M548.0 121.3v7.7M550.8 125.2v7.7M552.1 131.8v2.3M554.9 132.9v7.7M576.4 121.3v7.7M578.0 127.9v2.3M582.1 136.8v7.7M590.2 132.9v7.7M591.6 134.8v3.9M594.3 138.7v3.9M595.7 138.7v3.9M607.9 141.4v4.7M609.3 145.9v5.2M610.6 151.1v4.3M612.0 154.2v3.9M615.2 152.2v7.7M618.8 154.2v3.9M631.1 152.2v7.7M635.1 152.2v7.7M649.0 129.0v7.7M658.3 143.3v2.3M659.6 138.7v11.6M666.0 140.6v7.7M667.8 143.3v2.3M670.5 142.6v3.9M677.3 142.6v3.9M686.9 132.9v7.7M703.2 142.6v3.9M707.3 146.4v3.9M708.6 148.4v7.7M711.4 146.4v11.6M722.2 163.8v7.7M725.0 173.5v3.9M726.3 173.5v3.9M731.8 182.0v2.3M734.5 185.1v3.9M735.9 187.0v5.9M737.2 190.7v6.7M742.7 216.7v6.3M744.0 221.8v4.4M763.1 216.0v3.9M768.5 214.1v7.7M769.9 220.6v2.3M773.4 229.5v7.7M780.8 202.5v7.7M784.8 192.8v11.6M786.2 197.4v2.3M790.3 205.9v4.5M791.6 209.2v4.2M794.4 214.5v4.5M795.7 216.5v5.0M797.1 217.9v6.8M801.7 245.0v7.7M803.9 233.4v7.7M809.3 237.8v5.0M810.7 243.5v7.2M813.4 257.0v4.8M815.3 268.2v7.7M819.8 254.6v3.9M824.3 252.7v7.7M835.2 248.8v7.7M836.6 252.7v7.7M843.4 255.4v2.3M844.7 260.4v7.7M862.9 254.6v3.9M870.6 258.5v11.6M876.0 266.2v3.9M880.1 267.2v5.1M882.8 269.1v5.0M885.0 289.6v4.9M888.3 289.6v4.8M892.4 285.5v11.6M896.4 293.3v3.9M903.2 289.4v11.6M914.1 286.3v2.3M916.9 279.7v7.7M922.3 281.7v3.9M925.0 285.5v11.6M926.4 294.0v2.3M929.1 297.1v3.9M934.5 308.7v3.9M935.9 306.8v7.7M946.8 304.9v3.9M948.2 306.8v7.7M949.5 306.8v7.7M953.6 313.4v2.3M956.3 312.6v11.6M959.0 318.4v7.7M968.2 321.1v2.3M979.1 322.2v7.7M994.0 285.5v3.9M1003.5 275.9v7.7M1014.4 268.2v7.7M1017.6 270.9v2.3M1021.2 266.5v6.4M1026.4 298.5v8.7M1028.0 304.8v7.0M1031.3 315.7v4.4M1033.1 321.1v2.3M1040.3 318.4v7.7M1044.4 324.2v3.9M1047.1 326.1v7.7M1049.8 328.0v3.9M1051.2 328.8v2.3M1058.0 324.2v11.6M1060.7 326.1v7.7M1064.8 321.1v2.3M1082.5 312.6v3.9M1083.8 314.5v7.7M1100.2 294.0v2.3M1105.6 297.1v11.6M1115.1 316.5v3.9M1127.4 317.2v2.3M1130.1 317.2v2.3M1145.5 301.0v3.9M1149.2 299.1v7.7M1157.3 308.7v11.6M1158.7 310.7v7.7M1168.2 312.6v11.6M1174.8 331.9v3.9M1176.4 331.9v3.9M1190.0 322.2v7.7M1199.5 316.5v3.9M1203.6 320.3v3.9M1205.0 321.1v2.3M1206.3 325.0v2.3M1210.4 324.2v3.9M1213.1 331.9v3.9M1214.5 330.0v7.7M1218.6 336.5v2.3M1222.7 337.7v7.7M1240.3 345.4v7.7M1243.1 348.1v2.3M1245.8 345.4v7.7M1252.6 333.8v7.7M1254.0 328.0v11.6M1262.1 322.2v7.7M1275.7 312.6v11.6M1281.2 310.7v7.7M1290.7 266.2v3.9M1294.8 275.9v7.7M1298.9 275.9v7.7M1300.2 275.9v7.7M1301.6 275.9v7.7M1319.3 252.7v7.7M1334.3 272.1v4.6M1335.6 276.5v5.1M1337.0 281.3v5.2M1338.3 286.7v5.2M1339.7 291.3v7.7M1343.8 299.1v7.7M1353.3 301.0v3.9M1362.8 306.8v7.7M1366.9 304.9v11.6M1392.8 297.1v11.6M1402.3 289.4v3.9M1404.2 277.8v3.9M1409.1 301.0v3.9M1412.2 301.0v3.9M1430.9 259.7v4.8M1433.6 264.3v7.7M1437.7 270.1v3.9M1439.0 268.2v7.7M1453.6 262.4v3.9M1456.3 262.4v11.6M1463.1 260.4v7.7M1474.0 258.5v3.9M1478.1 262.5v6.4M1479.5 266.6v5.6M1483.0 289.5v5.0M1484.6 285.3v5.3M1486.3 281.7v3.9M1490.4 298.0v4.4M1501.2 293.3v3.9M1508.0 266.2v3.9M1511.3 277.3v5.0M1518.5 293.3v3.9M1531.2 284.4v4.4M1532.5 289.8v4.4M1535.3 297.1v11.6M1536.9 301.0v3.9M1546.2 310.7v6.3M1565.2 289.4v3.9M1610.1 258.5v11.6M1631.9 236.1v2.3M1664.8 217.9v7.7M1674.1 223.7v3.9M1691.8 192.8v3.9M1706.7 196.7v3.9M1712.2 200.5v3.9M1713.5 197.4v2.3M1759.8 196.7v3.9M1761.2 201.3v2.3M1768.0 223.1v4.6M1769.3 223.8v4.9M1772.1 223.7v3.9M1799.3 223.7v11.6M1800.6 223.7v3.9M1809.1 192.8v3.9M1827.9 177.3v3.9M1866.0 165.8v11.6M1872.8 177.3v3.9M1875.5 179.3v7.7M1883.7 193.6v2.3M1898.3 177.3v3.9" stroke="#0a84f0" stroke-width="1.8" fill="none"/>
<path d="M41.4 174.4V184.5M58.5 192.7V201.5M78.9 217.2V227.1M113.0 194.0V201.5M129.3 203.6V213.1M239.0 191.3V206.3M243.6 187.2V198.1M247.7 188.6V197.4M283.1 161.4V172.9M337.5 191.3V198.8M349.8 190.0V199.5M357.9 196.8V206.3M385.1 170.9V187.2M437.4 138.2V153.9M455.9 147.8V156.6M477.7 121.9V130.1M493.2 117.8V128.7M502.3 94.7V103.5M511.3 98.8V106.3M650.7 131.4V139.6M808.0 233.5V242.4M818.1 262.1V270.2M821.6 249.8V260.0M831.1 248.5V259.4M882.8 271.6V280.5M910.0 279.8V287.3M1169.6 316.5V324.4M1267.6 313.8V321.3M1290.7 267.5V277.7M1404.2 279.8V294.1M1414.0 297.5V306.3M1426.0 251.2V265.5M1430.9 262.1V273.0M1441.4 243.0V272.3M1450.9 251.2V273.7M1459.1 256.6V267.5M1486.3 283.9V296.1M1508.0 267.5V279.1M1529.8 281.1V288.6M1542.1 294.7V307.0M1553.0 311.1V323.3M1616.9 240.3V251.2M1629.2 234.9V243.7M1641.4 237.6V245.8M1666.5 217.2V224.7M1683.6 194.0V202.9M1708.1 188.6V203.6M1716.3 191.3V201.5M1748.1 176.3V185.2M1765.8 209.0V216.5M1810.7 192.7V202.2M13.6 214.1v7.7M21.8 227.6v3.9M24.5 227.6v3.9M25.9 225.9v4.4M27.2 217.4v5.0M28.6 208.9v5.7M29.9 204.5v6.3M31.3 200.8v5.6M32.7 197.0v5.0M35.4 190.1v5.1M36.7 186.0v5.3M50.4 188.9v3.9M54.4 200.5v3.9M71.3 223.7v3.9M73.1 225.6v7.7M77.6 216.0v11.6M80.3 212.1v11.6M93.9 231.4v3.9M95.3 229.5v7.7M99.6 224.5v2.3M101.3 216.1v4.8M103.0 213.2v5.2M107.5 205.5v4.2M108.9 200.5v11.6M123.8 206.3v7.7M126.6 205.2v2.3M141.5 210.2v7.7M153.8 223.7v3.9M163.3 228.4v2.3M164.7 227.6v11.6M166.0 229.5v7.7M167.4 229.5v7.7M168.8 231.4v3.9M191.9 239.2v3.9M193.2 233.4v7.7M196.0 227.3v4.3M197.3 223.7v3.9M208.2 217.9v7.7M209.6 216.0v11.6M224.6 231.4v3.9M228.6 221.8v4.4M230.0 218.6v4.4M234.1 208.3v5.9M239.0 188.8v5.1M249.0 196.7v3.9M259.9 216.0v3.9M262.7 212.1v3.9M264.0 208.3v3.9M268.1 200.5v3.9M273.5 192.8v3.9M274.9 189.0v4.6M276.3 184.6v5.2M277.6 181.2v3.9M279.0 174.7v6.0M280.3 170.0v4.5M294.0 173.5v3.9M298.0 169.6v11.6M299.4 173.5v3.9M300.8 174.3v2.3M302.1 173.5v3.9M307.2 158.0v11.6M314.4 171.6v7.7M321.2 183.1v7.7M325.3 182.0v2.3M345.7 200.5v3.9M348.4 192.8v3.9M360.6 196.7v3.9M363.4 196.7v3.9M366.1 196.7v3.9M367.4 192.8v3.9M368.8 192.8v3.9M378.3 187.0v7.7M379.7 185.8v2.3M390.6 188.9v3.9M393.3 187.0v7.7M396.0 185.1v3.9M400.1 185.1v3.9M401.5 183.1v7.7M405.6 179.3v7.7M417.8 173.5v3.9M420.5 175.4v7.7M423.2 169.6v11.6M426.0 169.6v3.9M430.0 163.8v7.7M432.8 160.9v6.4M437.4 134.8v11.6M454.5 148.4v7.7M455.9 146.4v3.9M458.6 148.4v7.7M464.1 148.4v7.7M466.8 144.5v7.7M470.9 140.6v7.7M476.3 125.2v7.7M489.9 131.0v3.9M496.7 115.1V124.6M514.0 102.0v7.7M520.8 109.7v7.7M529.0 121.3v7.7M541.2 119.4v3.9M556.2 138.7v3.9M565.7 132.9v7.7M567.1 127.1v11.6M597.0 134.8v11.6M617.0 150.3v11.6M621.5 154.9v2.3M632.4 154.2v3.9M633.8 152.2v7.7M643.3 142.6v11.6M646.0 139.7v4.4M647.4 135.6v2.3M656.9 136.8v7.7M661.0 140.6v7.7M669.2 143.3v2.3M671.9 134.8v11.6M674.6 138.7v11.6M678.7 136.8v7.7M688.2 134.8v3.9M699.1 131.0v11.6M700.5 138.7v3.9M718.2 160.0v7.7M729.0 182.0v2.3M739.9 210.2v7.7M741.3 216.0v3.9M752.2 219.9v11.6M753.5 223.7v3.9M756.3 219.9v3.9M757.6 214.1v7.7M759.0 217.9v7.7M761.7 212.1v11.6M775.3 214.1v7.7M778.0 208.8v5.9M783.5 196.7v11.6M818.1 262.4v3.9M825.7 263.1v2.3M829.8 254.6v3.9M837.9 254.6v3.9M847.4 258.5v3.9M855.6 250.8v11.6M874.7 266.2v3.9M889.6 287.5v7.7M891.0 287.5v7.7M907.3 283.6v7.7M912.8 282.4v2.3M915.5 277.8v11.6M918.2 283.6v7.7M938.6 310.7v7.7M944.1 302.9v7.7M945.4 304.9v3.9M964.1 316.5v3.9M983.1 312.6v3.9M984.5 309.9v5.2M985.9 307.1v5.3M987.2 301.6v5.4M988.6 295.2v7.7M989.9 291.6v5.0M991.3 287.1v4.4M995.4 281.7v3.9M998.1 281.7v3.9M1006.3 278.6v2.3M1009.0 274.7v2.3M1015.8 270.1v3.9M1037.6 316.5v11.6M1038.9 316.5v3.9M1043.0 322.2v7.7M1062.1 324.2v3.9M1066.2 320.3v3.9M1070.2 304.9v11.6M1071.6 306.8v7.7M1085.2 312.6v3.9M1092.0 304.8v4.4M1093.4 300.8v4.2M1096.1 293.3v3.9M1097.5 294.0v2.3M1126.0 316.5v3.9M1132.8 312.6v3.9M1136.9 308.7v3.9M1138.3 302.9v7.7M1139.6 301.0v3.9M1141.0 304.9v3.9M1143.7 301.0v3.9M1161.4 310.7v7.7M1166.9 312.6v11.6M1179.1 331.9v3.9M1185.9 332.7v2.3M1195.4 317.2v2.3M1198.2 317.2v2.3M1207.7 322.2v7.7M1237.6 343.5v3.9M1241.7 347.4v3.9M1248.5 339.6v3.9M1251.2 335.8v3.9M1256.7 328.0v3.9M1260.8 324.2v3.9M1268.9 316.5v3.9M1273.0 316.5v11.6M1283.9 316.1v7.3M1285.3 318.4v7.2M1287.4 277.1V300.2M1287.4 272.4v9.3M1288.0 272.6v8.8M1289.3 269.9v4.8M1303.0 278.6v2.3M1305.7 272.0v7.7M1308.4 270.9v2.3M1309.8 262.4v3.9M1311.1 262.4v3.9M1313.8 262.4v3.9M1322.0 258.5v11.6M1326.1 258.5v11.6M1345.4 302.9v7.7M1350.6 304.9v3.9M1356.0 301.8v2.3M1360.1 308.7v3.9M1361.5 306.8v7.7M1365.6 308.7v3.9M1369.6 304.9v11.6M1372.6 301.0v3.9M1377.8 305.6v2.3M1380.5 299.1v7.7M1390.0 299.1v7.7M1394.1 297.1v3.9M1395.5 291.3v7.7M1398.2 283.6v7.7M1415.6 297.7v5.0M1417.3 300.5v4.8M1418.6 292.5v4.6M1421.4 277.2v9.3M1422.7 275.9v7.7M1424.1 255.8v4.4M1426.0 249.0v4.5M1435.0 270.1v3.9M1436.3 270.1v4.9M1455.0 266.2v3.9M1494.4 301.8v2.3M1495.8 297.9v2.3M1497.2 289.4v11.6M1502.6 292.6v4.4M1504.0 283.9v5.3M1505.3 276.2v4.5M1506.7 266.2v11.6M1523.9 289.4v3.9M1525.7 283.6v7.7M1551.6 324.2v3.9M1562.5 299.0v5.2M1566.6 289.0v4.3M1572.0 277.8v3.9M1576.1 266.2v3.9M1578.8 264.3v7.7M1594.7 260.4v7.7M1629.2 229.5v7.7M1663.2 223.7v3.9M1678.2 209.0v5.5M1693.1 193.6v2.3M1694.5 192.8v3.9M1702.7 198.6v7.7M1708.1 185.1v3.9M1802.0 215.9v5.3M1823.8 181.2v11.6M1845.6 185.1v3.9M1876.9 183.1v7.7M1880.9 185.1v3.9" stroke="#ff0000" stroke-width="1.8" fill="none"/>
<path d="M19.6 484.7h2.4M23.2 480.9h2.3M24.6 477.0h2.3M40.3 473.2h2.4M48.1 484.7h2.4M63.8 515.5h2.4M74.9 550.1h2.4M91.1 532.8v3.8M91.6 530.9h2.3M101.2 496.3h2.4M121.9 500.1h2.4M130.1 484.7h2.3M145.6 573.2h2.3M149.4 561.6v7.7M149.7 565.5h2.3M151.1 565.5h2.3M152.5 569.3h2.3M153.9 573.2h2.3M156.3 567.4v3.8M156.6 565.5h2.3M159.1 561.6v7.7M159.4 565.5h2.3M161.9 567.4v3.8M163.5 569.3h2.3M164.9 573.2h2.3M170.5 584.7h2.3M176.0 584.7h2.3M178.7 594.3v3.8M182.2 598.2v3.8M185.7 596.3h2.3M187.1 596.3h2.3M189.8 596.3h2.3M191.2 596.3h2.3M195.1 594.3v3.8M203.2 584.7h2.3M206.1 590.5v3.8M206.8 584.7h2.3M209.7 579.0v3.8M215.8 615.5h2.3M217.5 619.3h2.3M221.6 623.2h2.3M242.4 561.6h2.3M247.9 554.0h2.3M256.2 569.3h2.3M257.6 565.5h2.3M259.0 573.2h2.3M260.4 577.0h2.3M264.5 569.3h2.3M267.0 567.4v3.8M267.3 569.3h2.3M268.7 569.3h2.3M271.2 567.4v3.8M272.8 565.5h2.3M274.2 565.5h2.3M293.6 550.1h2.3M299.1 546.3h2.3M300.5 550.1h2.3M304.1 557.8h2.3M308.4 546.3h2.3M313.0 542.4h2.3M314.3 550.1h2.3M315.7 554.0h2.3M319.9 557.8h2.3M321.3 561.6h2.3M322.6 565.5h2.3M327.9 565.5v7.7M329.6 569.3h2.3M334.8 563.6v3.8M340.6 550.1h2.3M342.0 546.3h2.3M343.4 550.1h2.3M344.8 557.8h2.3M353.6 554.0h2.3M360.0 550.1h2.3M366.9 554.0h2.3M371.1 557.8h2.3M373.8 550.1h2.3M375.2 546.3h2.3M376.6 550.1h2.3M390.4 600.1h2.3M402.4 596.3h2.3M407.6 596.3h2.3M409.2 592.4h2.3M410.9 592.4h2.3M423.6 577.0h2.3M428.9 573.2v7.7M434.7 557.8h2.3M436.1 557.8h2.3M437.9 557.8h2.3M439.8 561.6h2.3M444.4 596.3h2.3M446.7 588.6h2.3M449.9 580.9h2.3M452.4 582.8v3.8M455.5 592.4h2.3M477.3 548.2v3.8M478.7 552.0v3.8M482.8 555.9v3.8M487.3 565.5h2.3M490.0 561.6h2.3M491.4 557.8h2.3M494.2 542.4h2.3M496.0 546.3h2.3M499.7 550.1h2.3M502.9 542.4h2.3M504.7 542.4h2.3M506.6 538.6h2.3M508.0 538.6h2.3M509.3 534.7h2.3M512.1 530.9h2.3M514.9 530.9h2.3M523.2 534.7h2.3M525.0 530.9h2.3M532.6 540.5v3.8M545.0 525.1v3.8M549.5 534.7h2.3M551.4 534.7h2.3M555.0 542.4h2.3M557.8 530.9h2.3M559.1 534.7h2.3M575.9 532.8v3.8M579.6 536.7v3.8M582.2 538.6h2.3M584.0 542.4h2.3M586.8 542.4h2.3M590.0 538.6h2.3M595.6 538.6h2.3M597.4 538.6h2.3M601.7 536.7v3.8M603.4 538.6h2.3M604.8 538.6h2.3M606.2 534.7h2.3M607.6 534.7h2.3M608.9 534.7h2.3M613.1 542.4h2.3M614.5 542.4h2.3M617.0 540.5v3.8M618.6 538.6h2.3M621.5 540.5v3.8M623.9 546.3h2.3M625.6 542.4h2.3M628.3 538.6h2.3M638.8 554.0h2.3M643.5 554.0h2.3M644.9 550.1h2.3M646.3 546.3h2.3M656.0 565.5h2.3M657.4 569.3h2.3M662.1 575.1v3.8M664.8 569.3v7.7M673.7 559.7v3.8M676.3 569.3h2.3M681.8 565.5h2.3M683.7 561.6h2.3M687.5 567.4v3.8M704.1 575.1v3.8M704.9 577.0h2.3M706.7 580.9h2.3M708.6 577.0h2.3M710.4 577.0h2.3M712.3 577.0h2.3M718.9 573.2v7.7M719.6 577.0h2.3M723.5 575.1v3.8M723.8 577.0h2.3M727.9 573.2h2.3M730.4 571.3v3.8M733.2 575.1v3.8M734.6 579.0v3.8M739.0 584.7h2.3M744.5 565.5h2.3M750.1 561.6h2.3M751.9 557.8h2.3M753.8 557.8h2.3M755.6 554.0h2.3M770.8 561.6h2.3M786.0 534.7h2.3M787.4 530.9h2.3M802.4 579.0v3.8M806.8 577.0h2.3M810.9 580.9h2.3M813.7 584.7h2.3M815.1 588.6h2.3M821.5 561.6h2.3M831.7 554.0h2.3M844.0 565.5h2.4M855.7 561.6h2.4M866.2 565.5h2.4M881.5 584.7h2.3M894.0 596.3h2.3M903.6 565.5h2.3M913.3 557.8h2.3M914.7 557.8h2.3M916.1 557.8h2.3M931.3 588.6h2.3M932.7 580.9h2.3M934.1 580.9h2.3M935.5 580.9h2.3M936.8 580.9h2.3M941.0 580.9h2.3M943.5 582.8v3.8M943.8 588.6h2.3M946.5 588.6h2.3M950.7 588.6h2.3M953.4 588.6h2.3M955.4 580.9h2.3M738.1 611.6h2.4M967.2 596.3h2.3M969.7 592.4v7.7M970.4 596.3h2.3M973.3 611.6h2.3M976.9 607.8h2.3M982.1 598.2v3.8M986.6 577.0h2.3M991.6 577.0h2.3M994.9 569.3h2.3M999.3 563.6v3.8M999.9 561.6h2.3M1008.6 561.6h2.4M1021.1 569.3h2.4M1033.1 580.9h2.3M1035.0 580.9h2.3M1050.9 580.9h2.4M1060.9 557.8h2.3M1062.7 554.0h2.3M1067.9 546.3v7.7M1068.2 546.3h2.3M1069.6 542.4h2.3M1072.1 536.7v3.8M1072.3 534.7h2.3M1073.7 538.6h2.3M1075.1 542.4h2.3M1080.6 546.3h2.3M1086.2 550.1h2.3M1090.3 550.1h2.3M1092.8 548.2v3.8M1093.7 538.6h2.3M1097.3 534.7h2.3M1099.1 534.7h2.3M1102.8 534.7h2.3M1104.2 527.0h2.3M1106.7 527.0v7.7M1110.8 517.4v3.8M1111.1 515.5h2.3M1112.5 515.5h2.3M1122.2 527.0h2.3M1123.5 527.0h2.3M1124.9 527.0h2.3M1127.7 530.9h2.3M1129.1 534.7h2.3M1130.9 530.9h2.3M1141.2 507.8h2.3M1142.9 507.8h2.3M1144.8 507.8h2.3M1146.6 507.8h2.3M1151.8 515.5h2.3M1154.7 515.5v7.7M1156.7 515.5h2.3M1155.1 519.3v7.7M1173.3 527.0h2.3M1174.7 523.2h2.3M1185.8 530.9h2.3M1195.5 530.9h2.3M1200.7 521.3v3.8M1210.0 515.5h2.4M1217.5 523.2h2.4M1228.7 538.6h2.3M1231.5 538.6h2.3M1235.3 529.0v3.8M1236.4 523.2h2.3M1239.8 530.9h2.3M1241.1 519.3h2.3M1242.5 511.7h2.3M1253.6 507.8h2.3M1260.5 492.4h2.3M1265.2 454.0h2.3M1273.8 477.0h2.3M1275.2 484.7h2.3M1278.1 488.6h2.3M1282.4 482.8v3.8M1285.4 480.9h2.3M1290.9 461.7h2.3M1305.1 475.1v3.8M1311.4 450.1h2.3M1314.5 446.3h2.3M1318.3 411.7v7.7M1318.6 434.7h2.3M1324.1 450.1h2.3M1325.5 454.0h2.3M1326.9 454.0h2.3M1330.8 455.9v3.8M1336.6 507.8h2.3M1351.3 542.4h2.3M1354.0 536.7v3.8M1354.6 530.9h2.3M1359.8 548.2v3.8M1368.4 573.2h2.3M1369.8 580.9h2.3M1372.6 569.3h2.3M1382.0 542.4v7.7M1382.3 550.1h2.3M1385.0 550.1h2.3M1386.4 550.1h2.3M1387.8 557.8h2.3M1389.2 546.3h2.3M1390.6 542.4h2.3M1393.3 550.1h2.3M1398.6 538.6v7.7M1399.3 542.4h2.3M1407.2 580.9h2.3M1410.5 596.3h2.3M1415.5 607.8h2.3M1419.1 596.3h2.3M1425.1 573.2h2.3M1426.5 577.0h2.3M1427.9 584.7h2.3M1430.7 584.7h2.3M1437.6 604.0h2.3M1451.4 584.7h2.3M1455.2 575.1v3.8M1458.3 580.9h2.3M1461.0 577.0h2.3M1464.9 579.0v3.8M1465.2 580.9h2.3M1468.0 577.0h2.3M1469.9 561.6h2.3M1472.1 573.2h2.3M1473.5 577.0h2.3M1480.4 592.4h2.3M1488.7 627.0h2.3M1490.9 634.7h2.3M1494.2 642.4h2.3M1497.0 638.6h2.3M1502.0 650.1h2.3M1506.7 630.9h2.3M1508.1 630.9h2.3M1509.5 634.7h2.3M1513.6 638.6h2.3M1515.0 634.7h2.3M1519.7 642.4h2.3M1523.3 654.0h2.3M1527.4 654.0h2.3M1529.9 644.3v3.8M1530.2 654.0h2.3M1534.4 665.5h2.3M1535.7 665.5h2.3M1539.9 669.3h2.3M1541.7 669.3h2.3M1544.9 677.0h2.3M1547.4 679.0v3.8M1548.8 688.6h2.3M1558.3 684.7h2.4M1564.5 663.6v3.8M1564.8 665.5h2.3M1566.2 669.3h2.3M1567.6 673.2h2.3M1569.4 673.2h2.3M1571.2 665.5h2.3M1573.1 650.1h2.3M1575.9 657.8h2.3M1578.6 654.0h2.3M1581.1 650.1v7.7M1581.4 650.1h2.3M1582.8 646.3h2.3M1584.2 646.3h2.3M1585.6 646.3h2.3M1586.9 646.3h2.3M1589.4 644.3v3.8M1591.1 630.9h2.3M1594.8 642.4h2.3M1596.6 646.3h2.3M1600.3 646.3h2.3M1602.2 646.3h2.3M1604.6 644.3v3.8M1604.9 642.4h2.3M1607.4 634.7v7.7M1607.7 627.0h2.3M1610.2 629.0v3.8M1616.0 623.2h2.3M1618.5 623.2v7.7M1618.8 630.9h2.3M1620.1 634.7h2.3M1625.4 644.3v3.8M1626.1 638.6h2.3M1628.0 634.7h2.3M1630.9 627.0v7.7M1632.3 630.9v7.7M1635.4 642.4h2.3M1636.7 642.4h2.3M1638.1 646.3h2.3M1639.5 650.1h2.3M1640.9 650.1h2.3M1642.3 650.1h2.3M1643.7 654.0h2.3M1645.0 657.8h2.3M1646.4 665.5h2.3M1647.8 657.8h2.3M1649.2 657.8h2.3M1654.4 638.6v7.7M1664.0 638.6h2.3M1666.7 632.8v3.8M1667.2 634.7h2.3M1669.7 629.0v3.8M1671.0 627.0v7.7M1675.2 617.4v3.8M1677.4 613.6v3.8M1677.8 611.6h2.3M1679.4 615.5h2.3M1680.9 615.5h2.3M1683.5 609.7v3.8M1683.8 619.3h2.3M1686.7 617.4v3.8M1688.6 611.6v7.7M1689.3 611.6h2.3M1692.3 609.7v3.8M1693.0 615.5h2.3M1694.8 615.5h2.3M1696.2 615.5h2.3M1697.6 611.6h2.3M1699.0 611.6h2.3M1700.8 611.6h2.3M1702.7 607.8h2.3M1704.5 607.8h2.3M1705.9 611.6h2.3M1710.1 634.7h2.3M1714.9 625.1v3.8M1715.6 623.2h2.3M1721.1 611.6h2.3M1723.6 613.6v3.8M1723.9 619.3h2.3M1726.7 611.6h2.3M1728.3 604.0h2.3M1733.3 604.0h2.3M1739.7 607.8v7.7M1746.0 604.0h2.3M1747.9 607.8h2.3M1750.8 605.9v3.8M1751.6 615.5h2.3M1753.4 615.5h2.3M1755.3 619.3h2.3M1757.1 619.3h2.3M1761.3 634.7h2.3M1764.0 634.7h2.3M1765.4 630.9h2.3M1766.8 638.6h2.3M1780.6 634.7h2.3M1783.1 636.6v3.8M1784.8 638.6h2.3M1787.3 636.6v3.8M1787.5 638.6h2.3M1810.4 627.0h2.4M1822.9 615.5h2.4M1831.7 604.0h2.4M1833.2 623.2h2.3M1834.6 623.2h2.3M1837.4 627.0h2.3M1848.3 623.2h2.4M1858.8 619.3h2.4M1867.8 634.7h2.3M1869.4 638.6h2.3M1871.1 638.6h2.3M1872.5 642.4h2.3M1875.3 646.3h2.3M1876.6 654.0h2.3M1887.1 646.3h2.4M1902.4 623.2h2.3M1904.2 623.2h2.3M1906.0 619.3h2.3M1914.8 619.3h2.3" stroke="#eae272" stroke-width="1.9" fill="none"/>
<path d="M71.4 515.7V515.7M72.8 515.7V515.7M89.6 533.6v2.3M95.5 497.7V497.7M111.5 492.2V503.2M111.5 503.2V503.2M111.5 500.0v6.5M143.3 550.3V564.1M146.7 560.0V572.4M174.9 588.3V598.7M180.4 594.5V602.8M206.1 580.7V593.2M226.9 613.2V620.8M241.3 565.5V577.9M137.5 528.1V543.4M137.5 540.5v3.8M138.4 539.4v8.0M140.0 542.0v5.4M141.7 544.3v3.8M143.3 561.3v5.5M145.3 551.9v5.0M163.3 568.2v2.3M170.2 576.6v5.5M172.9 586.8v4.4M174.9 596.3v7.7M184.0 598.2v3.8M196.5 591.3v2.3M197.8 586.6v3.8M199.2 582.8v11.5M202.5 579.0v3.8M211.1 582.8v11.5M213.9 599.1v7.5M215.3 606.5v6.5M220.0 615.5v7.7M247.6 548.2v3.8M250.4 556.3v4.5M251.8 560.6v4.3M253.2 561.6v7.7M278.1 565.5v7.7M305.2 549.6V560.0M303.4 548.2v11.5M312.7 542.4v7.7M318.2 552.0v3.8M319.6 556.7v2.3M325.1 565.5v7.7M329.3 567.4v11.5M333.4 568.2v2.3M349.6 550.1v7.7M363.9 544.3v3.8M365.2 548.2v3.8M366.6 544.3v11.5M369.4 552.0v3.8M380.5 552.9v5.8M381.8 562.0v5.7M384.6 572.3v7.1M386.0 574.8v6.3M387.4 582.8v5.4M388.8 590.2v5.9M390.1 595.1v2.3M405.4 588.6v7.7M407.0 594.3v3.8M446.0 575.2V595.9M442.7 559.0v7.5M444.1 563.3v7.2M445.5 571.0V595.9M446.0 594.3v3.8M453.8 582.8v3.8M455.2 586.6v3.8M457.9 592.3v4.4M471.8 577.9V577.9M537.6 539.9V547.5M556.1 533.7V542.0M481.5 550.1v7.7M484.2 554.0v7.7M485.6 555.9v11.5M514.6 529.0v3.8M520.6 530.9v7.7M522.4 529.7v2.3M528.0 537.4v2.3M529.8 534.7v7.7M534.0 536.7v11.5M537.6 545.1v2.3M548.6 532.8v3.8M561.6 532.8v11.5M623.3 539.9V547.5M581.5 536.7v3.8M586.5 541.3v2.3M600.4 536.7v3.8M603.1 536.7v3.8M612.8 534.7v7.7M623.3 548.2v3.8M630.8 537.4v2.3M632.6 540.5v3.8M653.8 555.8V564.1M653.8 543.4V564.1M653.8 564.1V564.1M653.8 561.0v6.2M655.4 563.4v5.7M663.5 575.1v3.8M675.5 561.6v7.7M686.1 564.3v2.3M690.3 571.5v4.5M691.7 575.1v4.3M740.1 567.6V586.2M715.2 571.3v3.8M717.0 571.3v3.8M727.6 575.1v3.8M731.8 571.3v11.5M747.0 563.6v3.8M748.4 559.7v11.5M789.9 525.1v3.8M792.1 536.7v3.8M793.5 540.5v5.7M794.9 544.6v8.6M801.0 568.3V583.5M816.2 576.6V586.2M820.3 565.5V586.2M825.3 560.0V568.3M801.0 562.7V583.5M801.0 583.5V583.5M801.0 580.9v7.7M803.7 575.1v3.8M805.1 572.0v2.3M806.5 571.3v11.5M809.3 579.0v3.8M810.7 579.0v3.8M823.9 561.6v7.7M828.1 559.7v3.8M831.4 552.0v3.8M834.2 557.1v4.3M853.5 562.7V576.6M853.6 576.6V576.6M853.5 572.7v7.7M884.5 587.6V598.7M877.1 569.3v7.7M878.5 575.9v2.3M879.8 575.3v5.3M881.2 575.1v11.5M884.5 596.5v4.3M886.2 588.6v7.7M899.2 588.3V595.9M908.9 554.0v7.7M913.0 552.0v11.5M918.6 555.9v11.5M920.0 557.8v7.7M921.3 559.7v3.8M940.7 579.7v2.3M946.2 586.6v3.8M949.0 584.7v7.7M950.4 583.6v2.3M974.4 600.8V611.1M965.5 588.6v7.7M966.9 590.5v3.8M976.2 604.0v7.7M992.7 567.6V577.9M1092.8 541.3V551.7M1066.5 552.8v2.3M1078.1 545.1v2.3M1079.9 540.5v3.8M1083.1 542.4v7.7M1084.5 544.3v3.8M1088.7 545.1v2.3M1090.0 540.5v11.5M1096.6 536.7v3.8M1102.0 532.8v3.8M1130.2 524.7V535.0M1127.4 521.3v3.8M1137.1 514.3v2.3M1149.5 502.0v11.5M1151.2 505.9v11.5M1156.5 518.2v2.3M1159.2 513.6v3.8M1160.6 511.7v7.7M1166.1 515.5v7.7M1168.0 519.3v7.7M1173.1 521.3v3.8M1177.2 525.1v3.8M1178.6 527.0v7.7M1177.2 533.8v5.2M1198.0 522.6V535.0M1195.2 521.3v3.8M1199.3 519.3v7.7M1202.1 519.3v7.7M1203.5 521.3v3.8M1231.2 535.0V543.4M1240.9 517.8V528.1M1225.6 525.6v5.0M1227.0 529.8v4.9M1231.2 538.6v7.7M1272.1 476.3V489.4M1286.5 472.8V482.5M1268.1 463.6v3.8M1269.9 475.7v5.2M1272.1 486.4v5.9M1273.5 471.7v4.9M1277.7 487.4v2.3M1293.8 463.6v3.8M1295.6 465.2v6.9M1305.0 463.1V479.7M1305.9 475.1v11.5M1316.9 432.7V442.4M1339.6 510.1V521.2M1350.1 544.7V571.0M1370.9 568.9V579.3M1321.1 434.7v7.7M1322.5 436.7v11.5M1323.9 442.5v4.3M1329.4 453.5v5.4M1332.2 454.2v9.5M1335.8 485.9v9.8M1339.6 515.5v11.5M1341.8 507.8v10.2M1344.1 521.2v11.0M1346.0 538.4v4.4M1347.9 546.4v5.0M1350.1 572.0v2.3M1357.1 540.5v3.8M1358.5 546.7v4.4M1361.2 551.3v4.4M1362.6 555.9v3.8M1364.0 555.9v3.8M1365.4 557.7v4.5M1366.8 561.6v5.0M1368.1 561.6v7.7M1388.9 543.4V555.8M1396.6 546.1V568.3M1384.7 545.1v2.3M1396.6 563.6v3.8M1404.1 544.3v11.5M1406.9 555.4v11.9M1409.9 584.3v9.3M1413.8 600.1v7.7M1441.4 603.5V615.3M1458.0 576.6V584.9M1494.0 636.0V648.5M1503.1 637.4V651.3M1513.3 631.9V640.2M1527.2 649.9V665.1M1549.9 679.6V687.2M1424.9 567.4v11.5M1430.4 580.9v7.7M1433.2 585.4v4.4M1434.5 590.2v4.5M1435.9 594.8v5.1M1437.3 597.2v5.7M1443.3 602.8v2.3M1458.0 583.6v2.3M1476.0 575.7v5.4M1477.4 578.5v4.4M1478.7 584.3v6.5M1483.7 606.3v6.9M1485.1 609.7v3.8M1486.5 617.0v7.7M1494.0 640.5v11.5M1496.7 632.8v3.8M1511.9 629.0v11.5M1513.3 636.6v11.5M1517.5 629.7v2.3M1519.1 632.8v11.5M1522.6 646.3v7.7M1527.2 664.3v2.3M1532.7 655.9v3.8M1534.1 663.6v3.8M1538.2 661.6v7.7M1539.6 661.6v7.7M1544.6 672.0v2.3M1548.6 682.8v3.8M1552.9 671.3v11.5M1568.7 664.4V674.8M1578.4 655.9v3.8M1608.8 626.4V626.4M1611.6 629.0v11.5M1647.5 652.6V662.3M1622.6 632.8v3.8M1624.0 636.6v11.5M1635.1 634.7v7.7M1708.4 614.5v4.3M1711.2 623.6V634.7M1711.2 634.7V634.7M1713.0 625.9v2.3M1726.4 611.6v7.7M1732.8 602.0v3.8M1736.1 602.0v3.8M1763.7 633.6v2.3M1837.1 623.2v7.7M1902.1 623.2v7.7M1915.9 619.4V619.4M1917.6 620.8V620.8" stroke="#0a84f0" stroke-width="1.8" fill="none"/>
<path d="M27.1 471.3v11.5M71.4 515.7V535.0M71.4 510.6v10.2M72.8 515.7V535.0M72.8 510.6v10.2M88.0 529.0v11.5M95.5 497.7V526.7M95.5 490.4v14.6M129.5 479.7v2.3M132.8 482.8v3.8M141.7 546.1V553.7M145.3 554.4V568.3M177.1 587.6V600.8M202.5 582.1V590.4M209.7 579.3V594.5M238.0 571.0V581.4M246.3 547.5V557.2M148.0 565.5v7.7M167.4 567.4v11.5M168.8 575.1v3.8M180.4 600.1v7.7M185.4 599.0v2.3M189.5 594.3v3.8M193.7 594.3v3.8M200.9 582.8v3.8M221.4 619.3v7.7M224.1 622.0v2.3M225.5 619.4v4.7M226.9 618.2v5.2M229.1 599.8v6.1M230.8 597.2v7.0M232.4 594.7v7.9M233.8 586.6v3.8M235.2 582.8v3.8M236.6 575.6v4.6M238.0 567.9v6.3M239.6 567.4v11.5M241.3 574.9v6.1M244.9 551.5v4.5M254.6 563.6v3.8M255.9 567.4v3.8M264.3 571.3v3.8M272.6 564.3v2.3M276.7 567.4v3.8M279.5 561.6v7.7M280.9 559.7v3.8M298.8 540.6V549.6M376.3 547.5V555.8M289.2 546.3v7.7M291.0 546.3v7.7M292.8 542.4v7.7M296.1 545.1v2.3M297.5 538.6v7.7M306.4 550.1v7.7M307.7 548.2v3.8M311.3 536.7v11.5M332.0 567.4v3.8M336.2 559.7v11.5M337.6 557.8v4.2M339.0 553.7v4.3M340.3 552.0v3.8M347.7 555.9v3.8M351.4 552.0v11.5M356.4 550.1v7.7M358.1 552.8v2.3M359.7 550.1v7.7M362.5 544.3v3.8M370.8 552.0v3.8M373.5 549.0v2.3M383.2 571.3v3.8M399.8 590.5v3.8M401.7 596.3v7.7M413.7 588.6v7.7M415.1 586.6v3.8M445.5 571.0V579.3M449.6 579.3V590.4M426.1 579.0v3.8M427.5 575.1v3.8M431.1 566.0v4.5M432.8 562.4v4.9M434.4 559.1v4.5M471.8 577.9V584.9M471.8 575.6v4.6M477.3 550.3V560.6M545.0 526.7V535.0M558.9 532.3V541.3M480.1 552.0v3.8M489.8 559.7v11.5M493.9 555.9v3.8M498.9 546.3v7.7M511.8 529.7v2.3M517.4 527.0v7.7M518.7 529.0v3.8M531.2 538.6v7.7M535.8 542.4v7.7M539.2 540.5v3.8M540.9 534.3v4.3M542.3 533.6v2.3M543.6 527.0v7.7M554.3 536.7v3.8M557.5 536.7v3.8M619.7 537.8V545.4M574.1 529.0v3.8M577.8 536.7v3.8M589.3 536.7v3.8M593.0 536.7v3.8M611.4 536.7v3.8M628.0 538.6v7.7M641.5 552.8v2.3M643.1 552.0v3.8M659.9 571.3v3.8M679.2 568.2v2.3M681.1 567.4v3.8M688.9 563.6v11.5M693.1 579.0v3.8M741.5 550.3V573.1M722.1 573.2v7.7M726.3 575.1v3.8M735.9 575.1v11.5M737.3 582.8v3.8M738.7 582.9v5.3M741.5 547.9v4.7M742.9 553.0v4.3M744.3 557.6v4.6M749.8 557.8v7.7M773.8 560.5v2.3M775.6 552.0v11.5M789.9 525.4V536.4M784.4 540.6v5.4M785.8 536.4v5.5M805.1 573.8V581.4M819.0 571.0V586.2M822.6 560.0V577.2M830.0 550.3V557.9M813.4 579.0v3.8M817.6 576.2v4.8M819.0 568.8v4.5M820.3 579.0v11.5M825.3 568.2v2.3M826.7 557.8v7.7M830.0 546.3v7.7M835.6 559.7v3.8M875.7 572.0v2.3M896.4 594.3v3.8M897.8 592.8v5.2M899.2 593.0v5.9M901.1 578.9v6.4M902.9 570.3v7.0M906.1 559.5v5.4M907.5 552.0v11.5M910.3 548.2v11.5M926.9 596.3v7.7M928.3 594.3v3.8M929.6 594.6v4.5M931.0 592.4v7.7M939.3 575.1v3.8M953.2 586.6v3.8M973.3 595.9V604.2M973.3 590.5v11.5M979.4 602.0v3.8M980.8 602.0v3.8M989.9 564.1V577.9M984.9 586.6v3.8M991.3 572.0v2.3M997.6 567.5v4.2M1073.4 532.3V541.3M1094.8 535.0V543.4M1058.2 565.6v5.2M1060.2 556.4v4.3M1085.9 545.1v2.3M1108.0 523.2v7.7M1127.4 524.0V531.6M1118.3 525.1v11.5M1120.5 519.3v7.7M1121.9 525.1v3.8M1139.0 505.9v3.8M1140.7 505.9v3.8M1169.8 521.3v11.5M1171.7 522.0v2.3M1195.2 521.2V532.3M1188.6 525.1v11.5M1190.2 529.0v3.8M1191.9 525.1v3.8M1193.5 519.3v7.7M1198.0 529.0v11.5M1237.5 521.2V530.9M1228.4 530.9v7.7M1233.9 533.6v2.3M1239.2 522.2v4.9M1245.4 507.8v7.7M1247.2 507.7v4.8M1266.3 454.8V474.9M1273.5 474.2V489.4M1289.8 450.7V460.3M1253.3 509.7v3.8M1256.1 507.1v5.2M1257.5 505.4v6.7M1259.4 495.6v7.0M1263.0 472.1v9.6M1264.4 470.1v8.1M1265.8 454.8V471.4M1265.8 452.8v2.3M1283.7 482.8v3.8M1285.1 480.0v6.9M1288.4 455.9v11.5M1289.8 446.3v7.7M1305.0 463.1V475.6M1318.3 418.8V438.9M1341.8 512.9V524.0M1352.4 540.6V551.7M1355.7 532.3V544.7M1310.9 452.8v2.3M1314.2 442.6v7.7M1316.9 436.7v11.5M1372.3 569.3v7.7M1375.1 560.2v5.0M1376.4 553.4v4.9M1377.8 553.5v4.6M1391.7 540.6V552.3M1380.6 540.5v11.5M1393.0 540.5v3.8M1402.3 544.3v3.8M1421.5 589.0V597.3M1415.2 602.8v2.3M1418.8 596.3v7.7M1421.5 584.7v7.7M1423.5 594.3v3.8M1471.0 564.1V575.9M1517.5 633.3V642.3M1529.9 645.7V661.6M1440.0 605.9v3.8M1441.4 609.7v11.5M1446.9 592.8v6.3M1448.3 588.0v4.8M1449.7 582.5v4.6M1451.1 581.3v4.4M1453.8 577.0v7.7M1456.6 579.0v3.8M1460.8 571.3v11.5M1463.5 575.9v2.3M1467.7 571.3v11.5M1480.1 582.8v11.5M1488.1 621.3v3.8M1499.5 634.7v7.7M1500.9 640.5v3.8M1504.7 638.6v7.7M1506.4 632.8v3.8M1551.4 679.0v3.8M1574.2 649.9V660.9M1608.8 626.4V635.4M1575.6 646.3v7.7M1592.2 631.9V644.3M1594.0 634.7v7.7M1599.6 644.3v3.8M1608.8 626.4V634.7M1651.7 649.4v4.7M1653.1 642.4v7.7M1663.6 632.8v11.5M1731.1 598.2v11.5M1737.9 606.6v2.3M1784.5 636.6v3.8M1791.4 629.0v3.8M1875.0 644.3v3.8M1900.7 629.0v3.8M1915.9 619.4V651.3M1917.6 620.8V652.6M1917.6 612.9v15.8" stroke="#ff0000" stroke-width="1.8" fill="none"/>
<polyline points="13.0,926.2 14.5,929.5 15.9,929.5 17.4,926.2 18.8,929.5 20.3,936.2 21.7,932.8 23.2,932.8 24.9,936.2 26.7,942.8 28.5,942.8 30.4,936.2 31.9,932.8 33.3,926.2 34.8,919.5 36.2,916.2 37.7,916.2 39.1,906.2 41.0,902.9 42.9,899.5 44.3,906.2 45.8,912.9 47.4,909.5 49.1,909.5 50.7,909.5 52.1,909.5 53.6,909.5 55.0,912.9 56.5,909.5 58.4,912.9 60.3,902.9 61.6,909.5 63.0,909.5 64.3,916.2 66.2,902.9 68.1,896.2 69.5,909.5 71.0,909.5 72.9,912.9 74.7,909.5 76.2,899.5 77.6,886.2 79.1,879.5 80.5,876.2 82.0,869.6 83.3,869.6 84.7,876.2 86.0,876.2 87.6,892.9 89.2,899.5 90.6,902.9 91.9,902.9 93.3,906.2 95.2,909.5 97.0,919.5 98.5,926.2 99.9,936.2 101.8,929.5 103.7,922.8 105.1,919.5 106.4,919.5 107.8,916.2 109.6,912.9 111.5,906.2 113.3,899.5 115.0,889.5 117.3,899.5 119.6,896.2 120.9,902.9 122.2,906.2 124.0,906.2 125.7,906.2 127.5,909.5 129.2,919.5 130.9,926.2 132.5,929.5 134.0,929.5 135.6,929.5 137.6,899.5 139.6,882.9 141.5,872.9 143.4,856.2 144.8,862.9 146.3,876.2 147.7,866.2 149.2,862.9 150.6,856.2 152.1,856.2 153.5,869.6 155.0,869.6 156.4,866.2 157.9,866.2 159.3,862.9 160.8,859.6 162.2,862.9 163.7,862.9 165.1,866.2 166.6,869.6 168.0,869.6 169.5,876.2 170.9,866.2 172.4,862.9 173.8,856.2 175.3,852.9 176.7,849.6 178.2,852.9 180.0,849.6 181.9,842.9 183.6,842.9 185.2,839.6 186.8,839.6 188.3,846.2 189.7,849.6 191.2,849.6 192.6,852.9 194.1,849.6 195.5,842.9 197.0,836.3 198.4,836.3 199.9,839.6 201.3,842.9 202.8,839.6 204.2,836.3 205.7,836.3 207.1,836.3 208.6,846.2 210.0,839.6 211.5,836.3 212.9,836.3 214.4,832.9 215.8,826.3 217.3,819.6 218.7,816.3 220.2,816.3 221.6,816.3 223.1,816.3 224.5,819.6 226.0,819.6 227.4,819.6 228.9,816.3 230.3,819.6 231.7,826.3 233.2,829.6 234.6,832.9 236.1,829.6 237.5,832.9 239.0,832.9 240.4,842.9 241.9,842.9 243.3,836.3 244.8,836.3 246.2,839.6 247.7,846.2 249.1,849.6 250.9,859.6 252.6,859.6 254.3,862.9 255.7,856.2 257.0,862.9 258.4,856.2 260.3,846.2 262.2,846.2 263.6,842.9 265.1,852.9 266.5,846.2 268.0,842.9 269.4,839.6 270.9,832.9 272.3,836.3 273.8,832.9 275.2,832.9 276.7,819.6 278.1,819.6 279.5,822.9 281.0,822.9 282.4,813.0 283.9,816.3 285.3,822.9 286.8,826.3 288.2,826.3 289.7,832.9 291.1,836.3 292.6,836.3 294.0,836.3 295.5,839.6 296.9,839.6 298.4,839.6 299.8,832.9 301.3,832.9 303.0,826.3 304.8,822.9 306.5,816.3 308.5,829.6 310.0,836.3 311.4,839.6 312.9,839.6 314.3,842.9 315.8,839.6 317.2,839.6 318.7,839.6 320.1,836.3 321.6,832.9 323.0,829.6 324.4,829.6 325.9,832.9 327.3,832.9 328.8,829.6 330.2,836.3 331.7,836.3 333.1,839.6 334.6,839.6 336.0,836.3 337.5,836.3 338.9,846.2 340.4,846.2 341.8,856.2 343.3,859.6 344.7,856.2 346.2,849.6 347.6,839.6 349.1,846.2 350.5,839.6 352.0,839.6 353.4,846.2 354.9,852.9 356.3,852.9 357.8,852.9 359.2,849.6 360.7,852.9 362.1,852.9 363.6,859.6 365.0,859.6 366.5,856.2 367.9,856.2 369.4,852.9 370.8,849.6 372.2,839.6 373.7,839.6 375.1,839.6 376.6,842.9 378.0,842.9 379.5,842.9 380.9,839.6 382.4,836.3 383.8,829.6 385.3,822.9 386.7,816.3 388.2,809.6 389.6,809.6 391.1,813.0 392.5,806.3 394.0,806.3 395.4,803.0 396.9,806.3 398.3,806.3 399.8,806.3 401.2,809.6 402.7,806.3 404.1,803.0 405.6,799.6 407.0,796.3 408.5,793.0 409.9,793.0 411.4,786.3 412.8,793.0 414.3,793.0 415.7,796.3 417.1,803.0 418.6,809.6 420.0,806.3 421.5,806.3 422.9,803.0 424.4,799.6 425.8,803.0 427.3,806.3 428.7,806.3 430.2,809.6 431.6,813.0 433.1,809.6 434.5,816.3 436.0,813.0 437.4,809.6 438.9,813.0 440.3,806.3 441.8,809.6 443.2,809.6 444.7,799.6 446.1,796.3 447.6,789.6 449.0,796.3 450.5,796.3 451.9,789.6 453.4,793.0 454.8,786.3 456.3,783.0 457.7,776.3 459.2,776.3 460.6,773.0 462.1,773.0 463.5,773.0 464.9,776.3 466.4,779.6 467.8,779.6 469.3,773.0 470.7,773.0 472.2,776.3 473.6,779.6 475.1,783.0 476.5,779.6 478.0,779.6 479.4,786.3 480.9,789.6 482.3,789.6 483.8,789.6 485.2,789.6 486.7,789.6 488.1,789.6 489.6,786.3 491.0,786.3 492.5,783.0 493.9,779.6 495.4,783.0 496.8,776.3 498.8,783.0 500.3,769.7 501.7,766.3 503.2,773.0 504.6,773.0 506.1,779.6 507.5,779.6 509.0,783.0 510.4,783.0 511.9,783.0 513.3,789.6 514.8,789.6 516.2,796.3 517.7,793.0 519.1,793.0 520.6,799.6 522.0,796.3 523.5,799.6 524.9,803.0 526.3,806.3 527.8,799.6 529.2,806.3 530.7,809.6 532.1,806.3 533.6,799.6 535.0,799.6 536.5,799.6 537.9,796.3 539.4,796.3 540.8,803.0 542.3,806.3 543.7,809.6 545.2,806.3 546.6,803.0 548.1,809.6 549.5,803.0 551.0,806.3 552.4,809.6 553.9,813.0 555.3,813.0 556.8,816.3 558.2,819.6 559.7,813.0 561.1,813.0 562.6,813.0 564.0,813.0 565.5,813.0 566.9,816.3 568.6,806.3 570.4,806.3 572.1,806.3 573.8,806.3 575.4,809.6 577.0,809.6 578.5,809.6 579.9,813.0 581.4,816.3 582.8,819.6 584.3,819.6 585.7,816.3 587.2,809.6 588.6,809.6 590.1,809.6 591.5,809.6 593.0,813.0 594.4,816.3 595.9,819.6 597.3,816.3 598.8,816.3 600.2,809.6 601.7,809.6 603.1,809.6 604.6,809.6 606.0,813.0 607.5,822.9 608.9,822.9 610.4,826.3 611.8,822.9 613.3,826.3 614.7,829.6 616.2,829.6 617.6,832.9 619.0,829.6 620.5,829.6 621.9,826.3 624.0,822.9 625.7,819.6 627.5,819.6 629.2,826.3 630.9,829.6 632.7,842.9 634.5,832.9 636.4,822.9 637.9,822.9 639.3,826.3 641.4,809.6 643.1,809.6 644.8,809.6 646.6,803.0 648.0,806.3 649.5,803.0 650.9,799.6 652.4,806.3 653.8,809.6 655.3,793.0 656.7,789.6 658.2,786.3 659.6,789.6 661.1,786.3 662.5,779.6 664.0,786.3 665.4,783.0 666.8,789.6 668.3,789.6 669.7,789.6 671.2,789.6 672.6,793.0 674.1,796.3 675.5,799.6 677.0,796.3 678.4,793.0 679.9,789.6 681.3,789.6 682.8,793.0 684.2,786.3 685.7,793.0 687.1,796.3 688.6,793.0 690.0,779.6 691.5,773.0 692.9,773.0 694.4,769.7 695.8,773.0 697.3,769.7 698.7,773.0 700.2,776.3 701.6,779.6 703.1,779.6 704.5,779.6 706.0,789.6 707.4,793.0 708.9,789.6 710.3,789.6 711.7,789.6 713.2,796.3 714.6,799.6 716.1,803.0 717.5,806.3 719.0,799.6 720.4,799.6 721.9,799.6 723.3,803.0 724.8,803.0 726.2,806.3 727.7,813.0 729.1,819.6 730.6,819.6 732.0,826.3 733.5,826.3 734.9,819.6 736.4,813.0 737.8,816.3 739.3,813.0 740.7,819.6 741.6,869.6 743.3,866.2 745.1,862.9 746.5,866.2 748.0,862.9 749.4,866.2 750.9,866.2 752.3,866.2 753.8,869.6 755.2,869.6 756.7,869.6 758.1,869.6 759.5,866.2 761.0,869.6 762.4,869.6 763.9,866.2 765.3,866.2 766.8,869.6 768.2,866.2 769.7,866.2 771.1,869.6 772.6,876.2 774.0,872.9 775.5,866.2 776.9,856.2 778.4,859.6 779.8,859.6 781.3,856.2 782.7,856.2 784.2,859.6 785.6,866.2 787.1,866.2 788.5,872.9 790.0,876.2 791.4,879.5 792.9,879.5 794.3,882.9 795.8,876.2 797.2,876.2 798.7,879.5 801.0,889.5 803.0,866.2 804.4,866.2 805.9,866.2 807.3,869.6 808.8,866.2 810.2,869.6 811.7,876.2 813.1,879.5 814.6,882.9 816.0,889.5 817.5,889.5 818.9,886.2 820.4,879.5 821.8,869.6 823.3,886.2 824.7,896.2 826.2,892.9 827.6,896.2 829.1,896.2 830.5,902.9 832.0,899.5 833.4,896.2 834.9,896.2 836.3,899.5 837.8,896.2 839.2,896.2 840.7,896.2 842.1,896.2 843.6,896.2 845.0,899.5 846.5,899.5 847.9,899.5 849.4,892.9 850.8,889.5 852.2,892.9 853.7,889.5 855.1,892.9 856.6,892.9 858.0,889.5 859.5,896.2 860.9,896.2 862.4,896.2 863.8,892.9 865.3,896.2 866.7,896.2 868.2,896.2 869.6,899.5 871.1,896.2 872.5,892.9 874.0,892.9 875.4,889.5 876.9,889.5 878.3,896.2 879.8,899.5 881.2,892.9 882.7,892.9 884.1,886.2 885.6,899.5 887.0,909.5 888.5,906.2 889.9,902.9 891.4,902.9 892.8,902.9 894.3,899.5 895.7,906.2 897.1,902.9 898.6,902.9 900.0,906.2 901.5,912.9 902.9,916.2 904.4,916.2 905.8,919.5 907.3,922.8 908.7,926.2 910.2,922.8 911.6,922.8 913.1,922.8 914.5,922.8 916.0,926.2 917.4,926.2 918.9,926.2 920.3,929.5 921.8,926.2 923.2,916.2 924.7,922.8 926.1,929.5 927.9,912.9 929.6,899.5 931.5,909.5 933.4,919.5 934.8,922.8 936.3,926.2 937.7,936.2 939.2,932.8 940.6,926.2 942.1,926.2 943.5,922.8 944.9,922.8 946.4,919.5 947.8,916.2 949.3,916.2 950.7,916.2 952.2,922.8 953.6,922.8 955.1,929.5 956.5,929.5 958.0,932.8 959.4,932.8 960.9,936.2 962.3,936.2 963.8,932.8 965.2,926.2 966.7,922.8 968.1,919.5 969.6,922.8 971.0,926.2 972.5,922.8 973.9,916.2 975.4,916.2 976.8,916.2 977.4,919.5 978.8,916.2 980.3,912.9 981.7,912.9 983.2,912.9 984.6,916.2 986.1,919.5 987.5,922.8 989.0,926.2 990.4,926.2 991.9,922.8 993.3,919.5 994.8,909.5 996.2,909.5 997.7,909.5 999.1,909.5 1000.6,912.9 1002.0,916.2 1003.5,916.2 1004.9,922.8 1006.3,916.2 1007.8,916.2 1009.2,912.9 1010.7,912.9 1012.1,919.5 1013.6,912.9 1015.0,916.2 1016.5,909.5 1017.9,909.5 1019.4,906.2 1020.8,906.2 1022.3,912.9 1023.7,922.8 1025.2,922.8 1026.6,926.2 1028.1,929.5 1029.5,929.5 1031.3,939.5 1033.0,942.8 1034.9,942.8 1036.8,936.2 1038.7,939.5 1040.5,936.2 1042.3,936.2 1044.0,942.8 1045.5,939.5 1046.9,942.8 1048.4,946.1 1049.8,942.8 1051.3,942.8 1052.7,946.1 1054.1,942.8 1055.6,942.8 1057.0,949.5 1058.5,959.5 1059.9,962.8 1061.4,962.8 1062.8,959.5 1064.3,956.1 1065.7,959.5 1067.2,962.8 1068.6,962.8 1070.1,962.8 1071.5,956.1 1073.0,962.8 1074.4,959.5 1075.9,956.1 1077.3,956.1 1078.8,952.8 1080.2,952.8 1081.7,959.5 1083.1,966.1 1084.6,959.5 1086.0,959.5 1087.5,959.5 1088.9,959.5 1090.4,959.5 1091.8,952.8 1093.8,946.1 1095.7,952.8 1097.6,956.1 1099.5,949.5 1101.4,952.8 1103.0,952.8 1104.7,959.5 1106.3,959.5 1107.7,966.1 1109.2,966.1 1110.6,976.1 1112.4,976.1 1114.1,986.1 1115.7,989.4 1117.3,989.4 1119.3,979.5 1121.1,976.1 1122.8,972.8 1124.7,976.1 1126.6,979.5 1128.5,976.1 1130.3,966.1 1132.0,972.8 1133.6,976.1 1135.3,979.5 1136.7,982.8 1138.2,982.8 1139.6,989.4 1141.1,986.1 1142.5,982.8 1144.0,982.8 1145.4,982.8 1146.8,979.5 1148.3,979.5 1149.7,982.8 1151.2,979.5 1152.6,976.1 1154.1,976.1 1155.5,979.5 1157.0,979.5 1158.4,979.5 1159.9,979.5 1161.3,979.5 1162.8,986.1 1164.2,979.5 1165.7,979.5 1167.1,982.8 1168.6,982.8 1170.3,989.4 1172.1,999.4 1173.8,992.8 1175.5,992.8 1177.3,989.4 1178.7,989.4 1180.2,992.8 1181.6,996.1 1183.1,996.1 1184.5,992.8 1186.0,989.4 1187.4,992.8 1188.9,989.4 1190.3,989.4 1191.7,992.8 1193.2,986.1 1194.6,986.1 1196.1,982.8 1197.5,976.1 1199.0,972.8 1200.4,976.1 1201.9,989.4 1203.3,982.8 1204.8,986.1 1206.2,989.4 1207.7,986.1 1209.1,989.4 1210.6,996.1 1212.0,996.1 1213.5,999.4 1214.9,1006.1 1216.4,1009.4 1217.8,1009.4 1219.3,1006.1 1220.7,1002.8 1222.2,999.4 1223.6,996.1 1225.1,996.1 1226.5,999.4 1228.0,1002.8 1229.4,1002.8 1230.9,1002.8 1232.3,999.4 1233.8,996.1 1235.2,996.1 1236.7,996.1 1238.1,1006.1 1239.5,1009.4 1241.0,1009.4 1242.4,1009.4 1243.9,1009.4 1245.3,1016.1 1246.8,1019.4 1248.2,1019.4 1249.7,1016.1 1251.1,1009.4 1252.6,1009.4 1254.0,1002.8 1255.5,1002.8 1256.9,1006.1 1258.4,1009.4 1259.8,1012.8 1261.3,1019.4 1262.7,1032.7 1264.2,1032.7 1265.6,1032.7 1267.1,1029.4 1268.5,1029.4 1270.0,1026.1 1271.4,1022.7 1272.9,1019.4 1274.3,1022.7 1275.8,1022.7 1277.2,1016.1 1278.7,1006.1 1280.1,1006.1 1281.6,1002.8 1283.0,1009.4 1284.4,1016.1 1285.9,1016.1 1287.3,1012.8 1288.8,1006.1 1290.2,1002.8 1291.7,1002.8 1293.1,999.4 1294.6,1002.8 1296.0,1016.1 1297.5,1002.8 1298.9,996.1 1300.4,992.8 1301.8,992.8 1303.3,992.8 1304.7,989.4 1306.2,992.8 1307.6,992.8 1309.1,999.4 1311.1,982.8 1312.5,996.1 1314.0,1002.8 1315.7,1002.8 1317.5,1002.8 1319.2,1002.8 1320.7,1009.4 1322.1,1006.1 1323.6,1009.4 1325.0,1002.8 1326.5,996.1 1327.9,996.1 1329.4,999.4 1330.8,999.4 1332.2,999.4 1333.7,999.4 1335.1,986.1 1336.6,969.5 1338.0,969.5 1339.5,966.1 1340.9,969.5 1342.4,969.5 1343.8,972.8 1345.3,966.1 1346.7,956.1 1348.2,952.8 1349.6,952.8 1351.7,942.8 1353.5,942.8 1355.4,952.8 1356.9,949.5 1358.3,942.8 1359.8,946.1 1361.2,946.1 1362.7,946.1 1364.1,946.1 1365.6,942.8 1367.0,946.1 1368.5,942.8 1369.9,936.2 1371.8,929.5 1373.7,926.2 1375.4,932.8 1377.1,936.2 1378.6,936.2 1380.0,942.8 1381.5,942.8 1382.9,946.1 1384.4,942.8 1385.8,946.1 1387.3,949.5 1388.7,949.5 1390.2,956.1 1391.6,956.1 1393.1,956.1 1394.5,939.5 1396.0,926.2 1397.4,929.5 1398.9,932.8 1400.3,939.5 1401.8,946.1 1403.2,936.2 1404.7,932.8 1406.1,922.8 1407.6,922.8 1409.0,916.2 1410.5,916.2 1411.9,919.5 1413.4,912.9 1414.8,899.5 1417.1,886.2 1418.6,896.2 1420.0,902.9 1421.5,896.2 1422.9,876.2 1424.7,886.2 1426.4,899.5 1427.8,892.9 1429.3,889.5 1430.7,886.2 1432.2,879.5 1433.6,879.5 1435.1,879.5 1436.5,879.5 1438.0,882.9 1439.4,872.9 1441.7,846.2 1442.9,876.2 1444.3,876.2 1445.8,872.9 1447.2,876.2 1448.7,882.9 1450.1,879.5 1451.6,882.9 1453.0,879.5 1454.5,882.9 1455.9,889.5 1457.4,882.9 1458.8,876.2 1460.3,876.2 1461.7,882.9 1463.2,879.5 1464.6,879.5 1466.1,879.5 1467.5,879.5 1469.4,886.2 1471.3,892.9 1472.7,889.5 1474.2,882.9 1475.9,882.9 1477.7,882.9 1479.1,889.5 1480.6,896.2 1482.0,899.5 1483.5,896.2 1484.9,896.2 1486.3,882.9 1487.8,869.6 1489.2,869.6 1490.7,869.6 1492.1,869.6 1493.6,869.6 1495.0,872.9 1496.5,872.9 1497.9,876.2 1499.4,869.6 1500.8,862.9 1502.3,859.6 1503.7,849.6 1505.2,842.9 1506.6,839.6 1508.1,839.6 1509.5,839.6 1511.0,846.2 1512.4,852.9 1513.9,852.9 1515.3,856.2 1517.0,866.2 1518.6,862.9 1520.2,869.6 1522.1,859.6 1524.0,846.2 1525.5,839.6 1526.9,839.6 1528.6,836.3 1530.4,836.3 1531.8,839.6 1533.3,839.6 1534.7,846.2 1536.2,849.6 1538.1,846.2 1539.9,836.3 1541.4,836.3 1542.8,832.9 1544.3,832.9 1545.7,836.3 1547.2,832.9 1548.6,839.6 1550.1,846.2 1551.5,849.6 1553.0,842.9 1554.4,842.9 1555.9,839.6 1557.6,846.2 1559.4,849.6 1561.2,839.6 1563.1,829.6 1564.6,829.6 1566.0,832.9 1567.5,829.6 1568.9,826.3 1570.4,829.6 1571.8,829.6 1573.3,832.9 1574.7,826.3 1576.2,829.6 1577.6,832.9 1579.0,829.6 1580.5,829.6 1581.9,826.3 1583.4,826.3 1585.1,822.9 1586.9,822.9 1588.8,829.6 1590.6,832.9 1592.4,836.3 1594.1,842.9 1596.0,836.3 1597.9,832.9 1599.3,829.6 1600.8,822.9 1602.2,822.9 1603.7,826.3 1605.1,822.9 1606.9,829.6 1608.6,839.6 1610.0,849.6 1611.5,846.2 1612.9,836.3 1614.4,826.3 1615.8,819.6 1617.3,822.9 1619.2,819.6 1621.1,819.6 1622.5,822.9 1624.0,822.9 1625.4,819.6 1626.8,816.3 1628.3,816.3 1629.7,803.0 1631.2,816.3 1632.6,816.3 1634.1,816.3 1635.5,819.6 1637.0,816.3 1638.4,813.0 1639.9,813.0 1641.3,806.3 1642.8,806.3 1644.2,796.3 1645.7,799.6 1647.1,799.6 1648.6,799.6 1650.0,796.3 1651.5,803.0 1652.9,803.0 1654.4,806.3 1655.8,809.6 1657.3,809.6 1658.7,806.3 1660.2,806.3 1661.6,803.0 1663.1,796.3 1664.5,793.0 1666.0,796.3 1667.4,799.6 1668.9,803.0 1670.3,803.0 1671.7,806.3 1673.2,809.6 1674.6,809.6 1676.1,809.6 1677.5,813.0 1679.3,813.0 1681.0,809.6 1682.9,803.0 1684.8,796.3 1686.2,799.6 1687.7,796.3 1689.1,799.6 1690.6,796.3 1692.0,796.3 1693.5,793.0 1695.4,799.6 1697.2,796.3 1699.3,806.3 1700.7,806.3 1702.2,803.0 1703.6,806.3 1705.9,813.0 1707.4,803.0 1708.8,796.3 1710.6,789.6 1712.3,783.0 1713.8,783.0 1715.2,789.6 1716.9,789.6 1718.7,796.3 1720.6,789.6 1722.4,786.3 1724.3,779.6 1726.2,776.3 1727.9,779.6 1729.7,786.3 1731.1,786.3 1732.6,783.0 1734.0,783.0 1735.5,786.3 1736.9,786.3 1738.4,789.6 1739.8,793.0 1741.3,789.6 1742.7,783.0 1744.6,783.0 1746.5,783.0 1748.2,789.6 1750.0,793.0 1751.4,796.3 1752.9,796.3 1754.3,789.6 1755.8,793.0 1757.2,796.3 1758.7,793.0 1760.4,793.0 1762.1,789.6 1763.9,789.6 1765.6,789.6 1767.3,793.0 1768.8,799.6 1770.2,813.0 1771.7,813.0 1773.1,809.6 1774.6,816.3 1776.0,816.3 1777.5,816.3 1778.9,819.6 1780.4,822.9 1781.8,822.9 1783.3,822.9 1784.7,819.6 1786.2,813.0 1787.6,813.0 1789.1,816.3 1790.5,809.6 1792.0,813.0 1793.9,813.0 1795.7,816.3 1797.4,813.0 1799.0,809.6 1800.7,809.6 1802.5,803.0 1804.4,803.0 1806.2,796.3 1807.9,786.3 1809.6,783.0 1811.4,783.0 1813.7,793.0 1815.1,789.6 1816.6,783.0 1818.0,779.6 1819.5,786.3 1820.9,786.3 1822.4,786.3 1823.8,789.6 1825.3,789.6 1826.7,786.3 1828.2,783.0 1829.6,786.3 1831.1,789.6 1832.5,789.6 1834.0,779.6 1835.4,779.6 1836.9,783.0 1838.3,783.0 1839.8,779.6 1841.2,776.3 1842.7,773.0 1844.1,779.6 1845.6,776.3 1847.0,776.3 1848.5,783.0 1849.9,776.3 1851.4,773.0 1852.8,769.7 1854.3,773.0 1855.7,776.3 1857.1,773.0 1858.6,776.3 1860.0,776.3 1861.5,783.0 1862.9,779.6 1864.4,776.3 1865.8,776.3 1867.3,773.0 1868.7,776.3 1870.2,769.7 1871.6,763.0 1873.1,759.7 1874.5,756.3 1876.0,759.7 1877.7,756.3 1879.5,749.7 1881.3,756.3 1883.2,756.3 1884.7,756.3 1886.1,763.0 1887.6,759.7 1889.3,766.3 1891.0,766.3 1892.9,763.0 1894.8,756.3 1896.3,759.7 1897.7,756.3 1899.2,756.3 1900.6,756.3 1902.1,766.3 1903.5,769.7 1905.2,776.3 1907.0,783.0 1908.9,779.6 1910.7,779.6 1912.2,776.3 1913.6,773.0 1915.7,786.3 1918.0,773.0 1919.4,769.7 1920.9,769.7 1922.3,769.7 1924.2,769.7 1926.1,773.0" stroke="#ff0000" stroke-width="2.8" fill="none" stroke-linejoin="bevel"/>
</svg>
<div class="m" style="left:1934.6px;top:81.1px"><span class="l">7,800</span></div>
<div class="m" style="left:1934.6px;top:177.6px"><span class="l">7,775</span></div>
<div class="m" style="left:1934.6px;top:274.6px"><span class="l">7,750</span></div>
<div class="m" style="left:1934.6px;top:371.6px"><span class="l">7,725</span></div>
<div class="m" style="left:53.7px;top:370.8px"><span class="l">04</span></div>
<div class="m" style="left:98.9px;top:370.8px"><span class="l">05</span></div>
<div class="m" style="left:113.5px;top:370.8px"><span class="l">06</span></div>
<div class="m" style="left:161.5px;top:370.8px"><span class="l">09</span></div>
<div class="m" style="left:258.1px;top:370.8px"><span class="l">10</span></div>
<div class="m" style="left:353.8px;top:370.8px"><span class="l">11</span></div>
<div class="m" style="left:446.3px;top:370.8px"><span class="l">12</span></div>
<div class="m" style="left:539.7px;top:370.8px"><span class="l">13</span></div>
<div class="m" style="left:631.6px;top:370.8px"><span class="l">14</span></div>
<div class="m" style="left:698.7px;top:370.8px"><span class="l">15</span></div>
<div class="m" style="left:740.8px;top:370.8px"><span class="l">16</span></div>
<div class="m" style="left:786.3px;top:370.8px"><span class="l">17</span></div>
<div class="m" style="left:881.7px;top:370.8px"><span class="l">18</span></div>
<div class="m" style="left:974.3px;top:370.8px"><span class="l">19</span></div>
<div class="m" style="left:1069.2px;top:370.8px"><span class="l">20</span></div>
<div class="m" style="left:1161.6px;top:370.8px"><span class="l">21</span></div>
<div class="m" style="left:1256.7px;top:370.8px"><span class="l">22</span></div>
<div class="m" style="left:1351.9px;top:370.8px"><span class="l">23</span></div>
<div class="m" style="left:1442.9px;top:370.8px"><span class="l">00</span></div>
<div class="m" style="left:1536.3px;top:370.8px"><span class="l">01</span></div>
<div class="m" style="left:1619.2px;top:370.8px"><span class="l">02</span></div>
<div class="m" style="left:1705.0px;top:370.8px"><span class="l">03</span></div>
<div class="m" style="left:1792.8px;top:370.8px"><span class="l">04</span></div>
<div class="m" style="left:1863.0px;top:370.8px"><span class="l">05</span></div>
<div class="m" style="left:1900.5px;top:370.8px"><span class="l">06</span></div>
<div class="m" style="left:1443px;top:345.5px"><span class="l">29</span></div>
<div class="a" style="left:1931.5px;top:152px;width:93.5px;height:34px;background:#d6d6d6"></div>
<div class="m pb" style="left:1932px;width:93px;top:154.5px">7,783</div>
<div class="m" style="left:1934.6px;top:445.6px"><span class="l">4,325</span></div>
<div class="m" style="left:1934.6px;top:541.6px"><span class="l">4,300</span></div>
<div class="m" style="left:1934.6px;top:637.6px"><span class="l">4,275</span></div>
<div class="m" style="left:53.7px;top:703.8px"><span class="l">04</span></div>
<div class="m" style="left:98.9px;top:703.8px"><span class="l">05</span></div>
<div class="m" style="left:113.5px;top:703.8px"><span class="l">06</span></div>
<div class="m" style="left:161.5px;top:703.8px"><span class="l">09</span></div>
<div class="m" style="left:258.1px;top:703.8px"><span class="l">10</span></div>
<div class="m" style="left:353.8px;top:703.8px"><span class="l">11</span></div>
<div class="m" style="left:446.3px;top:703.8px"><span class="l">12</span></div>
<div class="m" style="left:539.7px;top:703.8px"><span class="l">13</span></div>
<div class="m" style="left:631.6px;top:703.8px"><span class="l">14</span></div>
<div class="m" style="left:698.7px;top:703.8px"><span class="l">15</span></div>
<div class="m" style="left:740.8px;top:703.8px"><span class="l">16</span></div>
<div class="m" style="left:786.3px;top:703.8px"><span class="l">17</span></div>
<div class="m" style="left:881.7px;top:703.8px"><span class="l">18</span></div>
<div class="m" style="left:974.3px;top:703.8px"><span class="l">19</span></div>
<div class="m" style="left:1069.2px;top:703.8px"><span class="l">20</span></div>
<div class="m" style="left:1161.6px;top:703.8px"><span class="l">21</span></div>
<div class="m" style="left:1256.7px;top:703.8px"><span class="l">22</span></div>
<div class="m" style="left:1351.9px;top:703.8px"><span class="l">23</span></div>
<div class="m" style="left:1442.9px;top:703.8px"><span class="l">00</span></div>
<div class="m" style="left:1536.3px;top:703.8px"><span class="l">01</span></div>
<div class="m" style="left:1619.2px;top:703.8px"><span class="l">02</span></div>
<div class="m" style="left:1705.0px;top:703.8px"><span class="l">03</span></div>
<div class="m" style="left:1792.8px;top:703.8px"><span class="l">04</span></div>
<div class="m" style="left:1863.0px;top:703.8px"><span class="l">05</span></div>
<div class="m" style="left:1900.5px;top:703.8px"><span class="l">06</span></div>
<div class="m" style="left:1443px;top:678.5px"><span class="l">29</span></div>
<div class="a" style="left:1931.5px;top:603.5px;width:93.5px;height:34.0px;background:#d6d6d6"></div>
<div class="m pb" style="left:1932px;width:93px;top:606.0px">4,285</div>
<div class="m" style="left:1934.6px;top:742.6px"><span class="l">3,500</span></div>
<div class="m" style="left:1934.6px;top:827.6px"><span class="l">3,475</span></div>
<div class="m" style="left:1934.6px;top:911.6px"><span class="l">3,450</span></div>
<div class="m" style="left:1934.6px;top:994.6px"><span class="l">3,425</span></div>
<div class="m" style="left:53.7px;top:1049.0px"><span class="l">04</span></div>
<div class="m" style="left:98.9px;top:1049.0px"><span class="l">05</span></div>
<div class="m" style="left:113.5px;top:1049.0px"><span class="l">06</span></div>
<div class="m" style="left:161.5px;top:1049.0px"><span class="l">09</span></div>
<div class="m" style="left:258.1px;top:1049.0px"><span class="l">10</span></div>
<div class="m" style="left:353.8px;top:1049.0px"><span class="l">11</span></div>
<div class="m" style="left:446.3px;top:1049.0px"><span class="l">12</span></div>
<div class="m" style="left:539.7px;top:1049.0px"><span class="l">13</span></div>
<div class="m" style="left:631.6px;top:1049.0px"><span class="l">14</span></div>
<div class="m" style="left:698.7px;top:1049.0px"><span class="l">15</span></div>
<div class="m" style="left:740.8px;top:1049.0px"><span class="l">16</span></div>
<div class="m" style="left:786.3px;top:1049.0px"><span class="l">17</span></div>
<div class="m" style="left:881.7px;top:1049.0px"><span class="l">18</span></div>
<div class="m" style="left:974.3px;top:1049.0px"><span class="l">19</span></div>
<div class="m" style="left:1069.2px;top:1049.0px"><span class="l">20</span></div>
<div class="m" style="left:1161.6px;top:1049.0px"><span class="l">21</span></div>
<div class="m" style="left:1256.7px;top:1049.0px"><span class="l">22</span></div>
<div class="m" style="left:1351.9px;top:1049.0px"><span class="l">23</span></div>
<div class="m" style="left:1442.9px;top:1049.0px"><span class="l">00</span></div>
<div class="m" style="left:1536.3px;top:1049.0px"><span class="l">01</span></div>
<div class="m" style="left:1619.2px;top:1049.0px"><span class="l">02</span></div>
<div class="m" style="left:1705.0px;top:1049.0px"><span class="l">03</span></div>
<div class="m" style="left:1792.8px;top:1049.0px"><span class="l">04</span></div>
<div class="m" style="left:1863.0px;top:1049.0px"><span class="l">05</span></div>
<div class="m" style="left:1900.5px;top:1049.0px"><span class="l">06</span></div>
<div class="m" style="left:1443px;top:1023.7px"><span class="l">29</span></div>
<div class="a" style="left:1931.5px;top:753.5px;width:93.5px;height:34.5px;background:#d6d6d6"></div>
<div class="m pb" style="left:1932px;width:93px;top:756.2px">3,498</div>
<div class="m" style="left:12.5px;top:78.8px"><span class="j">時刻</span><span class="l">:06:00 </span><span class="j">始値</span><span class="l">:7,783 </span><span class="j">高値</span><span class="l">:7,783 </span><span class="j">安値</span><span class="l">:7,783 </span><span class="j">終値</span><span class="l">:7,783</span></div>
<div class="m" style="left:12.5px;top:406.3px"><span class="j">時刻</span><span class="l">:06:00 </span><span class="j">始値</span><span class="l">:--- </span><span class="j">高値</span><span class="l">:--- </span><span class="j">安値</span><span class="l">:--- </span><span class="j">終値</span><span class="l">:---</span></div>
<div class="m" style="left:13.2px;top:739.8px"><span class="l">[</span><span class="j">金</span><span class="l"> 23/12 7,783</span><span class="x">×</span><span class="l">1.00]</span><span class="j">－</span><span class="l">[</span><span class="j">白金</span><span class="l"> 23/12 4,285</span><span class="x">×</span><span class="l">1.00] </span><span class="j">終値</span><span class="l"> </span><span class="j">時刻</span><span class="l">:06:00 3,498</span></div>
</body></html>
